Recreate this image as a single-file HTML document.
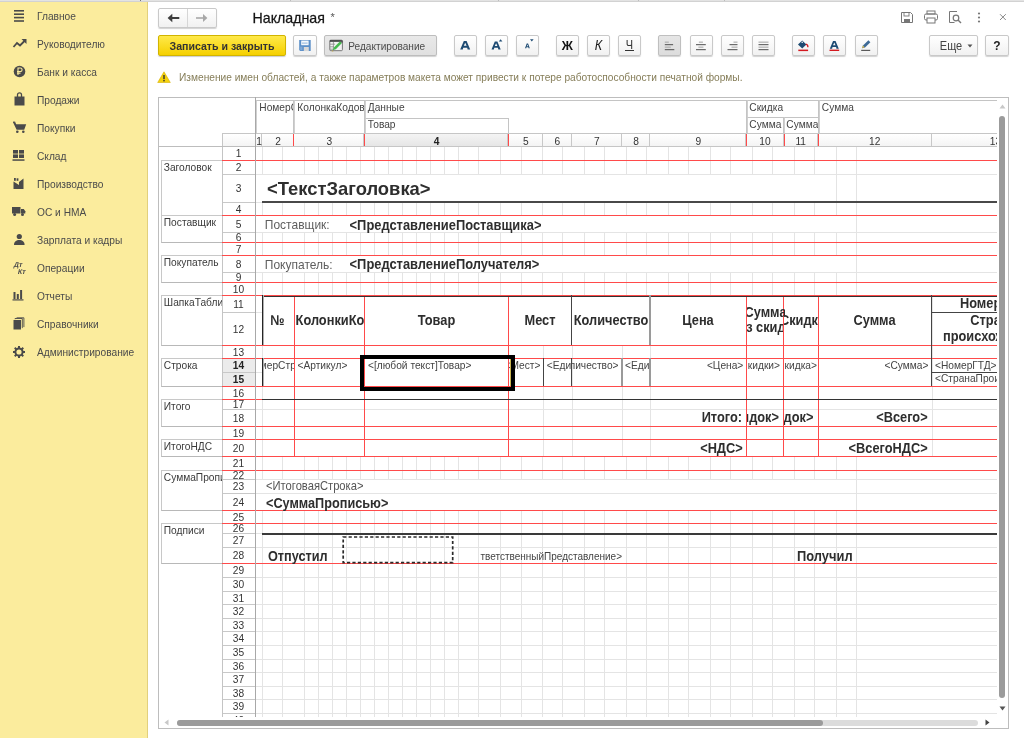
<!DOCTYPE html><html><head><meta charset="utf-8"><style>
html,body{margin:0;padding:0;width:1024px;height:738px;overflow:hidden;background:#fff;font-family:"Liberation Sans",sans-serif;}
body{position:relative;will-change:transform}
.btn{position:absolute;box-sizing:border-box;border:1px solid #C9C9C9;border-radius:2px;background:linear-gradient(#FFFFFF,#F1F1F1);box-shadow:0 1px 1px rgba(0,0,0,0.18)}
</style></head><body>
<div style="position:absolute;left:0px;top:0px;width:1024px;height:1px;background:#E3E3E3"></div>
<div style="position:absolute;left:0px;top:1px;width:1024px;height:1px;background:#D2D2D2"></div>
<div style="position:absolute;left:140px;top:0px;width:1px;height:1px;background:#777"></div>
<div style="position:absolute;left:290px;top:0px;width:1px;height:1px;background:#BDBDBD"></div>
<div style="position:absolute;left:498px;top:0px;width:1px;height:1px;background:#BDBDBD"></div>
<div style="position:absolute;left:638px;top:0px;width:1px;height:1px;background:#BDBDBD"></div>
<div style="position:absolute;left:724px;top:0px;width:1px;height:1px;background:#BDBDBD"></div>
<div style="position:absolute;left:0px;top:2px;width:147px;height:736px;background:#FBEC9D"></div>
<div style="position:absolute;left:147px;top:2px;width:1px;height:736px;background:#E2D07C"></div>
<div style="position:absolute;top:8.97px;left:37.00px;line-height:15px;height:15px;font-size:10.2px;font-weight:normal;color:#4B4B4B;white-space:pre;transform:scaleY(1.1);transform-origin:0 11.03px;;">Главное</div>
<div style="position:absolute;top:36.97px;left:37.00px;line-height:15px;height:15px;font-size:10.2px;font-weight:normal;color:#4B4B4B;white-space:pre;transform:scaleY(1.1);transform-origin:0 11.03px;;">Руководителю</div>
<div style="position:absolute;top:64.97px;left:37.00px;line-height:15px;height:15px;font-size:10.2px;font-weight:normal;color:#4B4B4B;white-space:pre;transform:scaleY(1.1);transform-origin:0 11.03px;;">Банк и касса</div>
<div style="position:absolute;top:92.97px;left:37.00px;line-height:15px;height:15px;font-size:10.2px;font-weight:normal;color:#4B4B4B;white-space:pre;transform:scaleY(1.1);transform-origin:0 11.03px;;">Продажи</div>
<div style="position:absolute;top:120.97px;left:37.00px;line-height:15px;height:15px;font-size:10.2px;font-weight:normal;color:#4B4B4B;white-space:pre;transform:scaleY(1.1);transform-origin:0 11.03px;;">Покупки</div>
<div style="position:absolute;top:148.97px;left:37.00px;line-height:15px;height:15px;font-size:10.2px;font-weight:normal;color:#4B4B4B;white-space:pre;transform:scaleY(1.1);transform-origin:0 11.03px;;">Склад</div>
<div style="position:absolute;top:176.97px;left:37.00px;line-height:15px;height:15px;font-size:10.2px;font-weight:normal;color:#4B4B4B;white-space:pre;transform:scaleY(1.1);transform-origin:0 11.03px;;">Производство</div>
<div style="position:absolute;top:204.97px;left:37.00px;line-height:15px;height:15px;font-size:10.2px;font-weight:normal;color:#4B4B4B;white-space:pre;transform:scaleY(1.1);transform-origin:0 11.03px;;">ОС и НМА</div>
<div style="position:absolute;top:232.97px;left:37.00px;line-height:15px;height:15px;font-size:10.2px;font-weight:normal;color:#4B4B4B;white-space:pre;transform:scaleY(1.1);transform-origin:0 11.03px;;">Зарплата и кадры</div>
<div style="position:absolute;top:260.97px;left:37.00px;line-height:15px;height:15px;font-size:10.2px;font-weight:normal;color:#4B4B4B;white-space:pre;transform:scaleY(1.1);transform-origin:0 11.03px;;">Операции</div>
<div style="position:absolute;top:288.97px;left:37.00px;line-height:15px;height:15px;font-size:10.2px;font-weight:normal;color:#4B4B4B;white-space:pre;transform:scaleY(1.1);transform-origin:0 11.03px;;">Отчеты</div>
<div style="position:absolute;top:316.97px;left:37.00px;line-height:15px;height:15px;font-size:10.2px;font-weight:normal;color:#4B4B4B;white-space:pre;transform:scaleY(1.1);transform-origin:0 11.03px;;">Справочники</div>
<div style="position:absolute;top:344.97px;left:37.00px;line-height:15px;height:15px;font-size:10.2px;font-weight:normal;color:#4B4B4B;white-space:pre;transform:scaleY(1.1);transform-origin:0 11.03px;;">Администрирование</div>
<svg style="position:absolute;left:13px;top:9px" width="12" height="13" viewBox="0 0 12 13"><g fill="#4A4A4A"><rect x="1" y="1" width="10" height="1.6"/><rect x="1" y="4.4" width="10" height="1.6"/><rect x="1" y="7.8" width="10" height="1.6"/><rect x="1" y="11.2" width="10" height="1.6"/></g></svg>
<svg style="position:absolute;left:12px;top:38px" width="16" height="11" viewBox="0 0 16 11"><polyline points="1.5,9 5,5 8,7.5 13,2.5" fill="none" stroke="#4A4A4A" stroke-width="1.8"/><polygon points="9.5,1 14.5,1 14.5,6" fill="#4A4A4A"/></svg>
<svg style="position:absolute;left:13px;top:65px" width="13" height="13" viewBox="0 0 13 13"><circle cx="6.5" cy="6.5" r="5.8" fill="#4A4A4A"/><path d="M5 10V3h2.3a1.8 1.8 0 0 1 0 3.6H4M4 8.3h3.5" stroke="#FBEC9D" stroke-width="1.1" fill="none"/></svg>
<svg style="position:absolute;left:13px;top:92px" width="13" height="14" viewBox="0 0 13 14"><path d="M1.5 4.5h10v9h-10z" fill="#4A4A4A"/><path d="M4.5 5V2.8a2 2 0 0 1 4 0V5" stroke="#4A4A4A" stroke-width="1.3" fill="none"/></svg>
<svg style="position:absolute;left:12px;top:121px" width="15" height="13" viewBox="0 0 15 13"><path d="M1 1.2h2.2l1 2h10l-2 5.5H4.6z" fill="#4A4A4A"/><path d="M1 1.2h2.2" stroke="#4A4A4A" stroke-width="1.2"/><circle cx="5.3" cy="10.8" r="1.3" fill="#4A4A4A"/><circle cx="11.3" cy="10.8" r="1.3" fill="#4A4A4A"/></svg>
<svg style="position:absolute;left:12px;top:149px" width="13" height="13" viewBox="0 0 13 13"><g fill="#4A4A4A"><rect x="1" y="1" width="5" height="3.6"/><rect x="7" y="1" width="5" height="3.6"/><rect x="1" y="5.4" width="5" height="3.6"/><rect x="7" y="5.4" width="5" height="3.6"/><rect x="0.5" y="10.3" width="12" height="1.5"/></g></svg>
<svg style="position:absolute;left:12px;top:177px" width="13" height="13" viewBox="0 0 13 13"><path d="M1.5 12V4.5L7 8V5l4.5 -3.5V12z" fill="#4A4A4A"/><rect x="2" y="1" width="1.8" height="2.8" fill="#4A4A4A"/><rect x="4.6" y="1.3" width="1.8" height="2.5" fill="#4A4A4A"/></svg>
<svg style="position:absolute;left:11px;top:206px" width="15" height="11" viewBox="0 0 15 11"><rect x="1" y="1" width="8.5" height="6.5" fill="#4A4A4A"/><path d="M10 3h2.8l1.5 2.2v2.3H10z" fill="#4A4A4A"/><circle cx="3.6" cy="8.6" r="1.5" fill="#4A4A4A"/><circle cx="11.5" cy="8.6" r="1.5" fill="#4A4A4A"/></svg>
<svg style="position:absolute;left:13px;top:233px" width="13" height="13" viewBox="0 0 13 13"><circle cx="6.3" cy="3.5" r="2.6" fill="#4A4A4A"/><path d="M1 12c0-3.2 2.3-5 5.3-5s5.3 1.8 5.3 5z" fill="#4A4A4A"/></svg>
<div style="position:absolute;left:13.6px;top:261px;font-size:7px;font-weight:bold;transform:skewX(-12deg);color:#4A4A4A;line-height:7px">Дт</div>
<div style="position:absolute;left:18.2px;top:268.2px;font-size:7px;font-weight:bold;transform:skewX(-12deg);color:#4A4A4A;line-height:7px">Кт</div>
<svg style="position:absolute;left:12px;top:289px" width="13" height="12" viewBox="0 0 13 12"><g fill="#4A4A4A"><rect x="1.5" y="3" width="2" height="7"/><rect x="4.8" y="5" width="2" height="5"/><rect x="8.1" y="1" width="2" height="9"/><rect x="0.5" y="10.3" width="11" height="1.2"/></g></svg>
<svg style="position:absolute;left:13px;top:317px" width="12" height="13" viewBox="0 0 12 13"><rect x="0.5" y="3" width="7.5" height="9.5" fill="#4A4A4A"/><path d="M2 2.2V1.5h7.3v9.3H9" stroke="#4A4A4A" stroke-width="0.9" fill="none"/><path d="M3.6 0.8h7.3v9.3" stroke="#4A4A4A" stroke-width="0.9" fill="none"/></svg>
<svg style="position:absolute;left:12px;top:345px" width="14" height="14" viewBox="0 0 14 14"><g transform="translate(7 7)"><circle r="3.6" fill="none" stroke="#4A4A4A" stroke-width="2"/><rect x="-1" y="-6" width="2" height="2.6" fill="#4A4A4A" transform="rotate(0)"/><rect x="-1" y="-6" width="2" height="2.6" fill="#4A4A4A" transform="rotate(45)"/><rect x="-1" y="-6" width="2" height="2.6" fill="#4A4A4A" transform="rotate(90)"/><rect x="-1" y="-6" width="2" height="2.6" fill="#4A4A4A" transform="rotate(135)"/><rect x="-1" y="-6" width="2" height="2.6" fill="#4A4A4A" transform="rotate(180)"/><rect x="-1" y="-6" width="2" height="2.6" fill="#4A4A4A" transform="rotate(225)"/><rect x="-1" y="-6" width="2" height="2.6" fill="#4A4A4A" transform="rotate(270)"/><rect x="-1" y="-6" width="2" height="2.6" fill="#4A4A4A" transform="rotate(315)"/></g></svg>
<div class="btn" style="left:158px;top:8px;width:59px;height:20px;border-radius:2px"></div>
<div style="position:absolute;left:187px;top:9px;width:1px;height:18px;background:#D6D6D6"></div>
<svg style="position:absolute;left:166px;top:12px" width="14" height="12" viewBox="0 0 14 12"><path d="M5 6h8.3" stroke="#3E3E3E" stroke-width="2"/><path d="M1.6 6L6.3 1.8V10.2z" fill="#3E3E3E"/></svg>
<svg style="position:absolute;left:195px;top:12px" width="14" height="12" viewBox="0 0 14 12"><path d="M1 6h8" stroke="#A8A8A8" stroke-width="1.6"/><path d="M12.4 6L8 2V10z" fill="#A8A8A8"/></svg>
<div style="position:absolute;top:8.08px;left:252.50px;line-height:20px;height:20px;font-size:14.2px;font-weight:normal;color:#151515;white-space:pre;transform:scaleY(1.04);transform-origin:0 14.92px;-webkit-text-stroke:0.25px #151515;">Накладная</div>
<div style="position:absolute;top:9.39px;left:330.50px;line-height:16px;height:16px;font-size:11px;font-weight:normal;color:#555;white-space:pre;;">*</div>
<svg style="position:absolute;left:900px;top:11px" width="14" height="13" viewBox="0 0 14 13"><path d="M1.5 1.5h9l2 2v8h-11z" fill="none" stroke="#777" stroke-width="1"/><rect x="4" y="1.5" width="5" height="3.5" fill="none" stroke="#777" stroke-width="0.9"/><rect x="4" y="8" width="6" height="3.5" fill="#777"/></svg>
<svg style="position:absolute;left:923px;top:10px" width="16" height="14" viewBox="0 0 16 14"><rect x="4" y="1" width="8" height="3" fill="none" stroke="#777" stroke-width="1"/><rect x="1.5" y="4" width="13" height="6" rx="1.5" fill="none" stroke="#777" stroke-width="1"/><rect x="4" y="8" width="8" height="5" fill="#fff" stroke="#777" stroke-width="1"/></svg>
<svg style="position:absolute;left:948px;top:10px" width="14" height="15" viewBox="0 0 14 15"><path d="M9 1.5H1.5v11h5" fill="none" stroke="#777" stroke-width="1"/><circle cx="8" cy="8" r="2.8" fill="none" stroke="#777" stroke-width="1.2"/><path d="M10 10l3 3" stroke="#777" stroke-width="1.4"/></svg>
<svg style="position:absolute;left:976px;top:11px" width="6" height="13" viewBox="0 0 6 13"><g fill="#777"><circle cx="3" cy="2.5" r="1.1"/><circle cx="3" cy="6.5" r="1.1"/><circle cx="3" cy="10.5" r="1.1"/></g></svg>
<svg style="position:absolute;left:999px;top:13px" width="8" height="8" viewBox="0 0 8 8"><path d="M1 1.2l5.8 5.8M6.8 1.2L1 7" stroke="#8A8A8A" stroke-width="1"/></svg>
<div style="position:absolute;left:158px;top:35px;width:128px;height:21px;box-sizing:border-box;border:1px solid #D1B400;border-radius:2px;background:linear-gradient(#FFE94A,#F5D000);box-shadow:0 1px 1px rgba(0,0,0,0.2)"></div>
<div style="position:absolute;top:38.83px;left:-278.00px;width:1000px;text-align:center;line-height:15px;height:15px;font-size:10.6px;font-weight:bold;color:#333;white-space:pre;transform:scaleY(1.1);transform-origin:0 11.17px;;">Записать и закрыть</div>
<div class="btn" style="left:293px;top:35px;width:24px;height:21px"></div>
<svg style="position:absolute;left:298px;top:39px" width="14" height="13" viewBox="0 0 14 13"><path d="M1.2 1.1h11.5V12.1H2.2l-1-1z" fill="#5B8FC8"/><rect x="3.2" y="1.6" width="7.4" height="4.6" fill="#F4F8FC"/><rect x="4" y="3.6" width="5.6" height="1" fill="#8DB3DC"/><rect x="5.8" y="8" width="5" height="4.1" fill="#D8D8D8"/><rect x="2.2" y="7.6" width="2.2" height="3.6" fill="#7FA9D6"/></svg>
<div class="btn" style="left:324px;top:35px;width:113px;height:21px;background:linear-gradient(#E9E9E9,#E0E0E0);border-color:#BDBDBD"></div>
<svg style="position:absolute;left:328px;top:38px" width="16" height="15" viewBox="0 0 16 15"><rect x="1.8" y="2.2" width="12.6" height="10.5" rx="1" fill="#F2F2F2" stroke="#6A6A6A" stroke-width="0.9"/><rect x="1.8" y="2.2" width="12.6" height="1.6" fill="#3A3A3A"/><path d="M2 6.2h5M2 8.8h4M2 11.2h3M5.4 4v8.6" stroke="#8A8A8A" stroke-width="0.8"/><path d="M4.6 12.2l1.3-2.8 6.2-6.2 1.9 1.9-6.2 6.2z" fill="#47B84F"/><path d="M12.1 3.2l1.2-1.2 1.9 1.9-1.2 1.2z" fill="#5A5A5A"/><path d="M3.6 13.6l1-1.4 1 1z" fill="#C9A535"/></svg>
<div style="position:absolute;top:38.50px;left:348.30px;line-height:15px;height:15px;font-size:10.1px;font-weight:normal;color:#4D4D4D;white-space:pre;transform:scaleY(1.1);transform-origin:0 11.00px;;">Редактирование</div>
<div class="btn" style="left:453.5px;top:35px;width:23px;height:21px;"></div>
<div class="btn" style="left:484.5px;top:35px;width:23px;height:21px;"></div>
<div class="btn" style="left:515.5px;top:35px;width:23px;height:21px;"></div>
<div class="btn" style="left:555.5px;top:35px;width:23px;height:21px;"></div>
<div class="btn" style="left:586.5px;top:35px;width:23px;height:21px;"></div>
<div class="btn" style="left:617.5px;top:35px;width:23px;height:21px;"></div>
<div class="btn" style="left:657.5px;top:35px;width:23px;height:21px;background:linear-gradient(#E6E6E6,#DCDCDC);border-color:#BFBFBF;"></div>
<div class="btn" style="left:689.5px;top:35px;width:23px;height:21px;"></div>
<div class="btn" style="left:720.5px;top:35px;width:23px;height:21px;"></div>
<div class="btn" style="left:751.5px;top:35px;width:23px;height:21px;"></div>
<div class="btn" style="left:791.5px;top:35px;width:23px;height:21px;"></div>
<div class="btn" style="left:822.5px;top:35px;width:23px;height:21px;"></div>
<div class="btn" style="left:854.5px;top:35px;width:23px;height:21px;"></div>
<svg style="position:absolute;left:0;top:0" width="1024" height="60"><path d="M460.2 49.6L463.8 41H466.59999999999997L470.2 49.6H467.59999999999997L467.2 47.708H463.2L462.8 49.6Z M463.8 45.816H466.59999999999997L465.2 42.72Z" fill="#1E4B73" fill-rule="evenodd"/><path d="M491.5 49.6L494.812 41.6H497.388L500.7 49.6H498.308L497.94 47.84H494.26L493.892 49.6Z M494.812 46.08H497.388L496.1 43.2Z" fill="#1E4B73" fill-rule="evenodd"/><path d="M498.8 41.4L500.6 39.2L502.4 41.4z" fill="#1E4B73"/><path d="M525 48.2L526.728 43.6H528.072L529.8 48.2H528.5519999999999L528.36 47.188H526.44L526.248 48.2Z M526.728 46.176H528.072L527.4 44.52Z" fill="#1E4B73" fill-rule="evenodd"/><path d="M530 39.2H533.6L531.8 41.4z" fill="#1E4B73"/></svg>
<div style="position:absolute;top:36.74px;left:67.20px;width:1000px;text-align:center;line-height:18px;height:18px;font-size:12.3px;font-weight:bold;color:#111;white-space:pre;transform:scaleY(1.1);transform-origin:0 13.26px;;">Ж</div>
<div style="position:absolute;top:36.83px;left:98.50px;width:1000px;text-align:center;line-height:18px;height:18px;font-size:12.6px;font-weight:normal;color:#1A1A1A;white-space:pre;transform:scaleY(1.1);transform-origin:0 13.37px;font-style:italic;">К</div>
<div style="position:absolute;top:37.19px;left:129.50px;width:1000px;text-align:center;line-height:16px;height:16px;font-size:11px;font-weight:normal;color:#333;white-space:pre;transform:scaleY(1.1);transform-origin:0 11.81px;;">Ч</div>
<div style="position:absolute;left:625px;top:50px;width:9px;height:1px;background:#333"></div>
<svg style="position:absolute;left:0;top:0" width="1024" height="60"><rect x="664.80" y="41.6" width="4" height="1.1" fill="#AAAAAA"/><rect x="664.80" y="44.1" width="8.3" height="1.1" fill="#5C5C5C"/><rect x="664.80" y="46.6" width="6" height="1.1" fill="#AAAAAA"/><rect x="664.80" y="49.1" width="9.5" height="1.1" fill="#5C5C5C"/><rect x="698.90" y="41.6" width="4" height="1.1" fill="#AAAAAA"/><rect x="696.00" y="44.1" width="9.8" height="1.1" fill="#5C5C5C"/><rect x="698.40" y="46.6" width="5" height="1.1" fill="#AAAAAA"/><rect x="696.00" y="49.1" width="9.8" height="1.1" fill="#5C5C5C"/><rect x="733.50" y="41.6" width="4" height="1.1" fill="#AAAAAA"/><rect x="729.50" y="44.1" width="8" height="1.1" fill="#5C5C5C"/><rect x="731.50" y="46.6" width="6" height="1.1" fill="#AAAAAA"/><rect x="727.50" y="49.1" width="10" height="1.1" fill="#5C5C5C"/><rect x="758.50" y="41.6" width="10" height="1.1" fill="#AAAAAA"/><rect x="758.50" y="44.1" width="10" height="1.1" fill="#5C5C5C"/><rect x="758.50" y="46.6" width="10" height="1.1" fill="#AAAAAA"/><rect x="758.50" y="49.1" width="10" height="1.1" fill="#5C5C5C"/></svg>
<svg style="position:absolute;left:0;top:0" width="1024" height="60"><path d="M802.2 40.5L806.4 44.5L802.2 48.5L798 44.5z" fill="#1E4B73"/><circle cx="802.2" cy="42.2" r="0.8" fill="#fff"/><path d="M805.8 44.2c1.3 0.2 2.2 1.3 2.1 3" stroke="#D41920" stroke-width="1.3" fill="none"/><rect x="798.3" y="49.6" width="9.8" height="1.5" fill="#D41920"/><path d="M829.8 48.8L833.04 41H835.56L838.8 48.8H836.4599999999999L836.0999999999999 47.084H832.5L832.14 48.8Z M833.04 45.368H835.56L834.3 42.56Z" fill="#1E4B73" fill-rule="evenodd"/><rect x="829.5" y="49.6" width="9.7" height="1.4" fill="#D41920"/><path d="M862 48.3L863 45.6L868.4 40.2L870.4 42.2L865 47.6z" fill="#3E6A96"/><path d="M862 48.3L863 45.6L864.7 47.3z" fill="#D9B84A"/><rect x="861.2" y="49.8" width="9" height="1.2" fill="#5A5A5A"/></svg>
<div class="btn" style="left:929px;top:35px;width:49px;height:21px"></div>
<div style="position:absolute;top:38.19px;left:451.00px;width:1000px;text-align:center;line-height:16px;height:16px;font-size:11px;font-weight:normal;color:#444;white-space:pre;transform:scaleY(1.1);transform-origin:0 11.81px;;">Еще</div>
<svg style="position:absolute;left:967px;top:44px" width="6" height="4" viewBox="0 0 6 4"><path d="M0.5 0.5h5L3 3.5z" fill="#555"/></svg>
<div class="btn" style="left:985px;top:35px;width:24px;height:21px"></div>
<div style="position:absolute;top:37.84px;left:497.00px;width:1000px;text-align:center;line-height:17px;height:17px;font-size:12px;font-weight:bold;color:#222;white-space:pre;transform:scaleY(1.1);transform-origin:0 12.66px;;">?</div>
<svg style="position:absolute;left:157px;top:71px" width="14" height="12" viewBox="0 0 14 12"><path d="M7 0.8L13.3 11.5H0.7z" fill="#F5D20C" stroke="#D6B000" stroke-width="0.6"/><rect x="6.3" y="4" width="1.4" height="4.2" fill="#333"/><rect x="6.3" y="9" width="1.4" height="1.4" fill="#333"/></svg>
<div style="position:absolute;top:69.57px;left:179.00px;line-height:15px;height:15px;font-size:10.18px;font-weight:normal;color:#857D58;white-space:pre;transform:scaleY(1.1);transform-origin:0 11.03px;;">Изменение имен областей, а также параметров макета может привести к потере работоспособности печатной формы.</div>
<div style="position:absolute;left:158px;top:97px;width:851px;height:632px;box-sizing:border-box;border:1px solid #BDBDBD"></div>
<div style="position:absolute;left:0;top:0;width:1024px;height:738px;overflow:hidden;clip-path:inset(0 0 21px 0)">
<div style="position:absolute;left:262px;top:146px;width:1px;height:14px;background:#E4E4E4"></div>
<div style="position:absolute;left:282px;top:146px;width:1px;height:14px;background:#E4E4E4"></div>
<div style="position:absolute;left:304px;top:146px;width:1px;height:14px;background:#E4E4E4"></div>
<div style="position:absolute;left:318px;top:146px;width:1px;height:14px;background:#E4E4E4"></div>
<div style="position:absolute;left:332px;top:146px;width:1px;height:14px;background:#E4E4E4"></div>
<div style="position:absolute;left:346px;top:146px;width:1px;height:14px;background:#E4E4E4"></div>
<div style="position:absolute;left:360px;top:146px;width:1px;height:14px;background:#E4E4E4"></div>
<div style="position:absolute;left:374px;top:146px;width:1px;height:14px;background:#E4E4E4"></div>
<div style="position:absolute;left:388px;top:146px;width:1px;height:14px;background:#E4E4E4"></div>
<div style="position:absolute;left:402px;top:146px;width:1px;height:14px;background:#E4E4E4"></div>
<div style="position:absolute;left:416px;top:146px;width:1px;height:14px;background:#E4E4E4"></div>
<div style="position:absolute;left:430px;top:146px;width:1px;height:14px;background:#E4E4E4"></div>
<div style="position:absolute;left:444px;top:146px;width:1px;height:14px;background:#E4E4E4"></div>
<div style="position:absolute;left:458px;top:146px;width:1px;height:14px;background:#E4E4E4"></div>
<div style="position:absolute;left:478px;top:146px;width:1px;height:14px;background:#E4E4E4"></div>
<div style="position:absolute;left:500px;top:146px;width:1px;height:14px;background:#E4E4E4"></div>
<div style="position:absolute;left:521px;top:146px;width:1px;height:14px;background:#E4E4E4"></div>
<div style="position:absolute;left:542px;top:146px;width:1px;height:14px;background:#E4E4E4"></div>
<div style="position:absolute;left:562px;top:146px;width:1px;height:14px;background:#E4E4E4"></div>
<div style="position:absolute;left:584px;top:146px;width:1px;height:14px;background:#E4E4E4"></div>
<div style="position:absolute;left:604px;top:146px;width:1px;height:14px;background:#E4E4E4"></div>
<div style="position:absolute;left:626px;top:146px;width:1px;height:14px;background:#E4E4E4"></div>
<div style="position:absolute;left:646px;top:146px;width:1px;height:14px;background:#E4E4E4"></div>
<div style="position:absolute;left:668px;top:146px;width:1px;height:14px;background:#E4E4E4"></div>
<div style="position:absolute;left:688px;top:146px;width:1px;height:14px;background:#E4E4E4"></div>
<div style="position:absolute;left:710px;top:146px;width:1px;height:14px;background:#E4E4E4"></div>
<div style="position:absolute;left:730px;top:146px;width:1px;height:14px;background:#E4E4E4"></div>
<div style="position:absolute;left:752px;top:146px;width:1px;height:14px;background:#E4E4E4"></div>
<div style="position:absolute;left:772px;top:146px;width:1px;height:14px;background:#E4E4E4"></div>
<div style="position:absolute;left:794px;top:146px;width:1px;height:14px;background:#E4E4E4"></div>
<div style="position:absolute;left:814px;top:146px;width:1px;height:14px;background:#E4E4E4"></div>
<div style="position:absolute;left:836px;top:146px;width:1px;height:14px;background:#E4E4E4"></div>
<div style="position:absolute;left:856px;top:146px;width:1px;height:14px;background:#E4E4E4"></div>
<div style="position:absolute;left:262px;top:160px;width:1px;height:14px;background:#E4E4E4"></div>
<div style="position:absolute;left:282px;top:160px;width:1px;height:14px;background:#E4E4E4"></div>
<div style="position:absolute;left:304px;top:160px;width:1px;height:14px;background:#E4E4E4"></div>
<div style="position:absolute;left:318px;top:160px;width:1px;height:14px;background:#E4E4E4"></div>
<div style="position:absolute;left:332px;top:160px;width:1px;height:14px;background:#E4E4E4"></div>
<div style="position:absolute;left:346px;top:160px;width:1px;height:14px;background:#E4E4E4"></div>
<div style="position:absolute;left:360px;top:160px;width:1px;height:14px;background:#E4E4E4"></div>
<div style="position:absolute;left:374px;top:160px;width:1px;height:14px;background:#E4E4E4"></div>
<div style="position:absolute;left:388px;top:160px;width:1px;height:14px;background:#E4E4E4"></div>
<div style="position:absolute;left:402px;top:160px;width:1px;height:14px;background:#E4E4E4"></div>
<div style="position:absolute;left:416px;top:160px;width:1px;height:14px;background:#E4E4E4"></div>
<div style="position:absolute;left:430px;top:160px;width:1px;height:14px;background:#E4E4E4"></div>
<div style="position:absolute;left:444px;top:160px;width:1px;height:14px;background:#E4E4E4"></div>
<div style="position:absolute;left:458px;top:160px;width:1px;height:14px;background:#E4E4E4"></div>
<div style="position:absolute;left:478px;top:160px;width:1px;height:14px;background:#E4E4E4"></div>
<div style="position:absolute;left:500px;top:160px;width:1px;height:14px;background:#E4E4E4"></div>
<div style="position:absolute;left:521px;top:160px;width:1px;height:14px;background:#E4E4E4"></div>
<div style="position:absolute;left:542px;top:160px;width:1px;height:14px;background:#E4E4E4"></div>
<div style="position:absolute;left:562px;top:160px;width:1px;height:14px;background:#E4E4E4"></div>
<div style="position:absolute;left:584px;top:160px;width:1px;height:14px;background:#E4E4E4"></div>
<div style="position:absolute;left:604px;top:160px;width:1px;height:14px;background:#E4E4E4"></div>
<div style="position:absolute;left:626px;top:160px;width:1px;height:14px;background:#E4E4E4"></div>
<div style="position:absolute;left:646px;top:160px;width:1px;height:14px;background:#E4E4E4"></div>
<div style="position:absolute;left:668px;top:160px;width:1px;height:14px;background:#E4E4E4"></div>
<div style="position:absolute;left:688px;top:160px;width:1px;height:14px;background:#E4E4E4"></div>
<div style="position:absolute;left:710px;top:160px;width:1px;height:14px;background:#E4E4E4"></div>
<div style="position:absolute;left:730px;top:160px;width:1px;height:14px;background:#E4E4E4"></div>
<div style="position:absolute;left:752px;top:160px;width:1px;height:14px;background:#E4E4E4"></div>
<div style="position:absolute;left:772px;top:160px;width:1px;height:14px;background:#E4E4E4"></div>
<div style="position:absolute;left:794px;top:160px;width:1px;height:14px;background:#E4E4E4"></div>
<div style="position:absolute;left:814px;top:160px;width:1px;height:14px;background:#E4E4E4"></div>
<div style="position:absolute;left:836px;top:160px;width:1px;height:14px;background:#E4E4E4"></div>
<div style="position:absolute;left:856px;top:160px;width:1px;height:14px;background:#E4E4E4"></div>
<div style="position:absolute;left:836px;top:174px;width:1px;height:28px;background:#E4E4E4"></div>
<div style="position:absolute;left:856px;top:174px;width:1px;height:28px;background:#E4E4E4"></div>
<div style="position:absolute;left:262px;top:202px;width:1px;height:13px;background:#E4E4E4"></div>
<div style="position:absolute;left:282px;top:202px;width:1px;height:13px;background:#E4E4E4"></div>
<div style="position:absolute;left:304px;top:202px;width:1px;height:13px;background:#E4E4E4"></div>
<div style="position:absolute;left:318px;top:202px;width:1px;height:13px;background:#E4E4E4"></div>
<div style="position:absolute;left:332px;top:202px;width:1px;height:13px;background:#E4E4E4"></div>
<div style="position:absolute;left:346px;top:202px;width:1px;height:13px;background:#E4E4E4"></div>
<div style="position:absolute;left:360px;top:202px;width:1px;height:13px;background:#E4E4E4"></div>
<div style="position:absolute;left:374px;top:202px;width:1px;height:13px;background:#E4E4E4"></div>
<div style="position:absolute;left:388px;top:202px;width:1px;height:13px;background:#E4E4E4"></div>
<div style="position:absolute;left:402px;top:202px;width:1px;height:13px;background:#E4E4E4"></div>
<div style="position:absolute;left:416px;top:202px;width:1px;height:13px;background:#E4E4E4"></div>
<div style="position:absolute;left:430px;top:202px;width:1px;height:13px;background:#E4E4E4"></div>
<div style="position:absolute;left:444px;top:202px;width:1px;height:13px;background:#E4E4E4"></div>
<div style="position:absolute;left:458px;top:202px;width:1px;height:13px;background:#E4E4E4"></div>
<div style="position:absolute;left:478px;top:202px;width:1px;height:13px;background:#E4E4E4"></div>
<div style="position:absolute;left:500px;top:202px;width:1px;height:13px;background:#E4E4E4"></div>
<div style="position:absolute;left:521px;top:202px;width:1px;height:13px;background:#E4E4E4"></div>
<div style="position:absolute;left:542px;top:202px;width:1px;height:13px;background:#E4E4E4"></div>
<div style="position:absolute;left:562px;top:202px;width:1px;height:13px;background:#E4E4E4"></div>
<div style="position:absolute;left:584px;top:202px;width:1px;height:13px;background:#E4E4E4"></div>
<div style="position:absolute;left:604px;top:202px;width:1px;height:13px;background:#E4E4E4"></div>
<div style="position:absolute;left:626px;top:202px;width:1px;height:13px;background:#E4E4E4"></div>
<div style="position:absolute;left:646px;top:202px;width:1px;height:13px;background:#E4E4E4"></div>
<div style="position:absolute;left:668px;top:202px;width:1px;height:13px;background:#E4E4E4"></div>
<div style="position:absolute;left:688px;top:202px;width:1px;height:13px;background:#E4E4E4"></div>
<div style="position:absolute;left:710px;top:202px;width:1px;height:13px;background:#E4E4E4"></div>
<div style="position:absolute;left:730px;top:202px;width:1px;height:13px;background:#E4E4E4"></div>
<div style="position:absolute;left:752px;top:202px;width:1px;height:13px;background:#E4E4E4"></div>
<div style="position:absolute;left:772px;top:202px;width:1px;height:13px;background:#E4E4E4"></div>
<div style="position:absolute;left:794px;top:202px;width:1px;height:13px;background:#E4E4E4"></div>
<div style="position:absolute;left:814px;top:202px;width:1px;height:13px;background:#E4E4E4"></div>
<div style="position:absolute;left:836px;top:202px;width:1px;height:13px;background:#E4E4E4"></div>
<div style="position:absolute;left:856px;top:202px;width:1px;height:13px;background:#E4E4E4"></div>
<div style="position:absolute;left:856px;top:215px;width:1px;height:17px;background:#E4E4E4"></div>
<div style="position:absolute;left:262px;top:232px;width:1px;height:10px;background:#E4E4E4"></div>
<div style="position:absolute;left:282px;top:232px;width:1px;height:10px;background:#E4E4E4"></div>
<div style="position:absolute;left:304px;top:232px;width:1px;height:10px;background:#E4E4E4"></div>
<div style="position:absolute;left:318px;top:232px;width:1px;height:10px;background:#E4E4E4"></div>
<div style="position:absolute;left:332px;top:232px;width:1px;height:10px;background:#E4E4E4"></div>
<div style="position:absolute;left:346px;top:232px;width:1px;height:10px;background:#E4E4E4"></div>
<div style="position:absolute;left:360px;top:232px;width:1px;height:10px;background:#E4E4E4"></div>
<div style="position:absolute;left:374px;top:232px;width:1px;height:10px;background:#E4E4E4"></div>
<div style="position:absolute;left:388px;top:232px;width:1px;height:10px;background:#E4E4E4"></div>
<div style="position:absolute;left:402px;top:232px;width:1px;height:10px;background:#E4E4E4"></div>
<div style="position:absolute;left:416px;top:232px;width:1px;height:10px;background:#E4E4E4"></div>
<div style="position:absolute;left:430px;top:232px;width:1px;height:10px;background:#E4E4E4"></div>
<div style="position:absolute;left:444px;top:232px;width:1px;height:10px;background:#E4E4E4"></div>
<div style="position:absolute;left:458px;top:232px;width:1px;height:10px;background:#E4E4E4"></div>
<div style="position:absolute;left:478px;top:232px;width:1px;height:10px;background:#E4E4E4"></div>
<div style="position:absolute;left:500px;top:232px;width:1px;height:10px;background:#E4E4E4"></div>
<div style="position:absolute;left:521px;top:232px;width:1px;height:10px;background:#E4E4E4"></div>
<div style="position:absolute;left:542px;top:232px;width:1px;height:10px;background:#E4E4E4"></div>
<div style="position:absolute;left:562px;top:232px;width:1px;height:10px;background:#E4E4E4"></div>
<div style="position:absolute;left:584px;top:232px;width:1px;height:10px;background:#E4E4E4"></div>
<div style="position:absolute;left:604px;top:232px;width:1px;height:10px;background:#E4E4E4"></div>
<div style="position:absolute;left:626px;top:232px;width:1px;height:10px;background:#E4E4E4"></div>
<div style="position:absolute;left:646px;top:232px;width:1px;height:10px;background:#E4E4E4"></div>
<div style="position:absolute;left:668px;top:232px;width:1px;height:10px;background:#E4E4E4"></div>
<div style="position:absolute;left:688px;top:232px;width:1px;height:10px;background:#E4E4E4"></div>
<div style="position:absolute;left:710px;top:232px;width:1px;height:10px;background:#E4E4E4"></div>
<div style="position:absolute;left:730px;top:232px;width:1px;height:10px;background:#E4E4E4"></div>
<div style="position:absolute;left:752px;top:232px;width:1px;height:10px;background:#E4E4E4"></div>
<div style="position:absolute;left:772px;top:232px;width:1px;height:10px;background:#E4E4E4"></div>
<div style="position:absolute;left:794px;top:232px;width:1px;height:10px;background:#E4E4E4"></div>
<div style="position:absolute;left:814px;top:232px;width:1px;height:10px;background:#E4E4E4"></div>
<div style="position:absolute;left:836px;top:232px;width:1px;height:10px;background:#E4E4E4"></div>
<div style="position:absolute;left:856px;top:232px;width:1px;height:10px;background:#E4E4E4"></div>
<div style="position:absolute;left:262px;top:242px;width:1px;height:13px;background:#E4E4E4"></div>
<div style="position:absolute;left:282px;top:242px;width:1px;height:13px;background:#E4E4E4"></div>
<div style="position:absolute;left:304px;top:242px;width:1px;height:13px;background:#E4E4E4"></div>
<div style="position:absolute;left:318px;top:242px;width:1px;height:13px;background:#E4E4E4"></div>
<div style="position:absolute;left:332px;top:242px;width:1px;height:13px;background:#E4E4E4"></div>
<div style="position:absolute;left:346px;top:242px;width:1px;height:13px;background:#E4E4E4"></div>
<div style="position:absolute;left:360px;top:242px;width:1px;height:13px;background:#E4E4E4"></div>
<div style="position:absolute;left:374px;top:242px;width:1px;height:13px;background:#E4E4E4"></div>
<div style="position:absolute;left:388px;top:242px;width:1px;height:13px;background:#E4E4E4"></div>
<div style="position:absolute;left:402px;top:242px;width:1px;height:13px;background:#E4E4E4"></div>
<div style="position:absolute;left:416px;top:242px;width:1px;height:13px;background:#E4E4E4"></div>
<div style="position:absolute;left:430px;top:242px;width:1px;height:13px;background:#E4E4E4"></div>
<div style="position:absolute;left:444px;top:242px;width:1px;height:13px;background:#E4E4E4"></div>
<div style="position:absolute;left:458px;top:242px;width:1px;height:13px;background:#E4E4E4"></div>
<div style="position:absolute;left:478px;top:242px;width:1px;height:13px;background:#E4E4E4"></div>
<div style="position:absolute;left:500px;top:242px;width:1px;height:13px;background:#E4E4E4"></div>
<div style="position:absolute;left:521px;top:242px;width:1px;height:13px;background:#E4E4E4"></div>
<div style="position:absolute;left:542px;top:242px;width:1px;height:13px;background:#E4E4E4"></div>
<div style="position:absolute;left:562px;top:242px;width:1px;height:13px;background:#E4E4E4"></div>
<div style="position:absolute;left:584px;top:242px;width:1px;height:13px;background:#E4E4E4"></div>
<div style="position:absolute;left:604px;top:242px;width:1px;height:13px;background:#E4E4E4"></div>
<div style="position:absolute;left:626px;top:242px;width:1px;height:13px;background:#E4E4E4"></div>
<div style="position:absolute;left:646px;top:242px;width:1px;height:13px;background:#E4E4E4"></div>
<div style="position:absolute;left:668px;top:242px;width:1px;height:13px;background:#E4E4E4"></div>
<div style="position:absolute;left:688px;top:242px;width:1px;height:13px;background:#E4E4E4"></div>
<div style="position:absolute;left:710px;top:242px;width:1px;height:13px;background:#E4E4E4"></div>
<div style="position:absolute;left:730px;top:242px;width:1px;height:13px;background:#E4E4E4"></div>
<div style="position:absolute;left:752px;top:242px;width:1px;height:13px;background:#E4E4E4"></div>
<div style="position:absolute;left:772px;top:242px;width:1px;height:13px;background:#E4E4E4"></div>
<div style="position:absolute;left:794px;top:242px;width:1px;height:13px;background:#E4E4E4"></div>
<div style="position:absolute;left:814px;top:242px;width:1px;height:13px;background:#E4E4E4"></div>
<div style="position:absolute;left:836px;top:242px;width:1px;height:13px;background:#E4E4E4"></div>
<div style="position:absolute;left:856px;top:242px;width:1px;height:13px;background:#E4E4E4"></div>
<div style="position:absolute;left:856px;top:255px;width:1px;height:17px;background:#E4E4E4"></div>
<div style="position:absolute;left:262px;top:272px;width:1px;height:10px;background:#E4E4E4"></div>
<div style="position:absolute;left:282px;top:272px;width:1px;height:10px;background:#E4E4E4"></div>
<div style="position:absolute;left:304px;top:272px;width:1px;height:10px;background:#E4E4E4"></div>
<div style="position:absolute;left:318px;top:272px;width:1px;height:10px;background:#E4E4E4"></div>
<div style="position:absolute;left:332px;top:272px;width:1px;height:10px;background:#E4E4E4"></div>
<div style="position:absolute;left:346px;top:272px;width:1px;height:10px;background:#E4E4E4"></div>
<div style="position:absolute;left:360px;top:272px;width:1px;height:10px;background:#E4E4E4"></div>
<div style="position:absolute;left:374px;top:272px;width:1px;height:10px;background:#E4E4E4"></div>
<div style="position:absolute;left:388px;top:272px;width:1px;height:10px;background:#E4E4E4"></div>
<div style="position:absolute;left:402px;top:272px;width:1px;height:10px;background:#E4E4E4"></div>
<div style="position:absolute;left:416px;top:272px;width:1px;height:10px;background:#E4E4E4"></div>
<div style="position:absolute;left:430px;top:272px;width:1px;height:10px;background:#E4E4E4"></div>
<div style="position:absolute;left:444px;top:272px;width:1px;height:10px;background:#E4E4E4"></div>
<div style="position:absolute;left:458px;top:272px;width:1px;height:10px;background:#E4E4E4"></div>
<div style="position:absolute;left:478px;top:272px;width:1px;height:10px;background:#E4E4E4"></div>
<div style="position:absolute;left:500px;top:272px;width:1px;height:10px;background:#E4E4E4"></div>
<div style="position:absolute;left:521px;top:272px;width:1px;height:10px;background:#E4E4E4"></div>
<div style="position:absolute;left:542px;top:272px;width:1px;height:10px;background:#E4E4E4"></div>
<div style="position:absolute;left:562px;top:272px;width:1px;height:10px;background:#E4E4E4"></div>
<div style="position:absolute;left:584px;top:272px;width:1px;height:10px;background:#E4E4E4"></div>
<div style="position:absolute;left:604px;top:272px;width:1px;height:10px;background:#E4E4E4"></div>
<div style="position:absolute;left:626px;top:272px;width:1px;height:10px;background:#E4E4E4"></div>
<div style="position:absolute;left:646px;top:272px;width:1px;height:10px;background:#E4E4E4"></div>
<div style="position:absolute;left:668px;top:272px;width:1px;height:10px;background:#E4E4E4"></div>
<div style="position:absolute;left:688px;top:272px;width:1px;height:10px;background:#E4E4E4"></div>
<div style="position:absolute;left:710px;top:272px;width:1px;height:10px;background:#E4E4E4"></div>
<div style="position:absolute;left:730px;top:272px;width:1px;height:10px;background:#E4E4E4"></div>
<div style="position:absolute;left:752px;top:272px;width:1px;height:10px;background:#E4E4E4"></div>
<div style="position:absolute;left:772px;top:272px;width:1px;height:10px;background:#E4E4E4"></div>
<div style="position:absolute;left:794px;top:272px;width:1px;height:10px;background:#E4E4E4"></div>
<div style="position:absolute;left:814px;top:272px;width:1px;height:10px;background:#E4E4E4"></div>
<div style="position:absolute;left:836px;top:272px;width:1px;height:10px;background:#E4E4E4"></div>
<div style="position:absolute;left:856px;top:272px;width:1px;height:10px;background:#E4E4E4"></div>
<div style="position:absolute;left:262px;top:282px;width:1px;height:13px;background:#E4E4E4"></div>
<div style="position:absolute;left:282px;top:282px;width:1px;height:13px;background:#E4E4E4"></div>
<div style="position:absolute;left:304px;top:282px;width:1px;height:13px;background:#E4E4E4"></div>
<div style="position:absolute;left:318px;top:282px;width:1px;height:13px;background:#E4E4E4"></div>
<div style="position:absolute;left:332px;top:282px;width:1px;height:13px;background:#E4E4E4"></div>
<div style="position:absolute;left:346px;top:282px;width:1px;height:13px;background:#E4E4E4"></div>
<div style="position:absolute;left:360px;top:282px;width:1px;height:13px;background:#E4E4E4"></div>
<div style="position:absolute;left:374px;top:282px;width:1px;height:13px;background:#E4E4E4"></div>
<div style="position:absolute;left:388px;top:282px;width:1px;height:13px;background:#E4E4E4"></div>
<div style="position:absolute;left:402px;top:282px;width:1px;height:13px;background:#E4E4E4"></div>
<div style="position:absolute;left:416px;top:282px;width:1px;height:13px;background:#E4E4E4"></div>
<div style="position:absolute;left:430px;top:282px;width:1px;height:13px;background:#E4E4E4"></div>
<div style="position:absolute;left:444px;top:282px;width:1px;height:13px;background:#E4E4E4"></div>
<div style="position:absolute;left:458px;top:282px;width:1px;height:13px;background:#E4E4E4"></div>
<div style="position:absolute;left:478px;top:282px;width:1px;height:13px;background:#E4E4E4"></div>
<div style="position:absolute;left:500px;top:282px;width:1px;height:13px;background:#E4E4E4"></div>
<div style="position:absolute;left:521px;top:282px;width:1px;height:13px;background:#E4E4E4"></div>
<div style="position:absolute;left:542px;top:282px;width:1px;height:13px;background:#E4E4E4"></div>
<div style="position:absolute;left:562px;top:282px;width:1px;height:13px;background:#E4E4E4"></div>
<div style="position:absolute;left:584px;top:282px;width:1px;height:13px;background:#E4E4E4"></div>
<div style="position:absolute;left:604px;top:282px;width:1px;height:13px;background:#E4E4E4"></div>
<div style="position:absolute;left:626px;top:282px;width:1px;height:13px;background:#E4E4E4"></div>
<div style="position:absolute;left:646px;top:282px;width:1px;height:13px;background:#E4E4E4"></div>
<div style="position:absolute;left:668px;top:282px;width:1px;height:13px;background:#E4E4E4"></div>
<div style="position:absolute;left:688px;top:282px;width:1px;height:13px;background:#E4E4E4"></div>
<div style="position:absolute;left:710px;top:282px;width:1px;height:13px;background:#E4E4E4"></div>
<div style="position:absolute;left:730px;top:282px;width:1px;height:13px;background:#E4E4E4"></div>
<div style="position:absolute;left:752px;top:282px;width:1px;height:13px;background:#E4E4E4"></div>
<div style="position:absolute;left:772px;top:282px;width:1px;height:13px;background:#E4E4E4"></div>
<div style="position:absolute;left:794px;top:282px;width:1px;height:13px;background:#E4E4E4"></div>
<div style="position:absolute;left:814px;top:282px;width:1px;height:13px;background:#E4E4E4"></div>
<div style="position:absolute;left:836px;top:282px;width:1px;height:13px;background:#E4E4E4"></div>
<div style="position:absolute;left:856px;top:282px;width:1px;height:13px;background:#E4E4E4"></div>
<div style="position:absolute;left:262px;top:456px;width:1px;height:14px;background:#E4E4E4"></div>
<div style="position:absolute;left:282px;top:456px;width:1px;height:14px;background:#E4E4E4"></div>
<div style="position:absolute;left:304px;top:456px;width:1px;height:14px;background:#E4E4E4"></div>
<div style="position:absolute;left:318px;top:456px;width:1px;height:14px;background:#E4E4E4"></div>
<div style="position:absolute;left:332px;top:456px;width:1px;height:14px;background:#E4E4E4"></div>
<div style="position:absolute;left:346px;top:456px;width:1px;height:14px;background:#E4E4E4"></div>
<div style="position:absolute;left:360px;top:456px;width:1px;height:14px;background:#E4E4E4"></div>
<div style="position:absolute;left:374px;top:456px;width:1px;height:14px;background:#E4E4E4"></div>
<div style="position:absolute;left:388px;top:456px;width:1px;height:14px;background:#E4E4E4"></div>
<div style="position:absolute;left:402px;top:456px;width:1px;height:14px;background:#E4E4E4"></div>
<div style="position:absolute;left:416px;top:456px;width:1px;height:14px;background:#E4E4E4"></div>
<div style="position:absolute;left:430px;top:456px;width:1px;height:14px;background:#E4E4E4"></div>
<div style="position:absolute;left:444px;top:456px;width:1px;height:14px;background:#E4E4E4"></div>
<div style="position:absolute;left:458px;top:456px;width:1px;height:14px;background:#E4E4E4"></div>
<div style="position:absolute;left:478px;top:456px;width:1px;height:14px;background:#E4E4E4"></div>
<div style="position:absolute;left:500px;top:456px;width:1px;height:14px;background:#E4E4E4"></div>
<div style="position:absolute;left:521px;top:456px;width:1px;height:14px;background:#E4E4E4"></div>
<div style="position:absolute;left:542px;top:456px;width:1px;height:14px;background:#E4E4E4"></div>
<div style="position:absolute;left:562px;top:456px;width:1px;height:14px;background:#E4E4E4"></div>
<div style="position:absolute;left:584px;top:456px;width:1px;height:14px;background:#E4E4E4"></div>
<div style="position:absolute;left:604px;top:456px;width:1px;height:14px;background:#E4E4E4"></div>
<div style="position:absolute;left:626px;top:456px;width:1px;height:14px;background:#E4E4E4"></div>
<div style="position:absolute;left:646px;top:456px;width:1px;height:14px;background:#E4E4E4"></div>
<div style="position:absolute;left:668px;top:456px;width:1px;height:14px;background:#E4E4E4"></div>
<div style="position:absolute;left:688px;top:456px;width:1px;height:14px;background:#E4E4E4"></div>
<div style="position:absolute;left:710px;top:456px;width:1px;height:14px;background:#E4E4E4"></div>
<div style="position:absolute;left:730px;top:456px;width:1px;height:14px;background:#E4E4E4"></div>
<div style="position:absolute;left:752px;top:456px;width:1px;height:14px;background:#E4E4E4"></div>
<div style="position:absolute;left:772px;top:456px;width:1px;height:14px;background:#E4E4E4"></div>
<div style="position:absolute;left:794px;top:456px;width:1px;height:14px;background:#E4E4E4"></div>
<div style="position:absolute;left:814px;top:456px;width:1px;height:14px;background:#E4E4E4"></div>
<div style="position:absolute;left:836px;top:456px;width:1px;height:14px;background:#E4E4E4"></div>
<div style="position:absolute;left:856px;top:456px;width:1px;height:14px;background:#E4E4E4"></div>
<div style="position:absolute;left:262px;top:470px;width:1px;height:9px;background:#E4E4E4"></div>
<div style="position:absolute;left:282px;top:470px;width:1px;height:9px;background:#E4E4E4"></div>
<div style="position:absolute;left:304px;top:470px;width:1px;height:9px;background:#E4E4E4"></div>
<div style="position:absolute;left:318px;top:470px;width:1px;height:9px;background:#E4E4E4"></div>
<div style="position:absolute;left:332px;top:470px;width:1px;height:9px;background:#E4E4E4"></div>
<div style="position:absolute;left:346px;top:470px;width:1px;height:9px;background:#E4E4E4"></div>
<div style="position:absolute;left:360px;top:470px;width:1px;height:9px;background:#E4E4E4"></div>
<div style="position:absolute;left:374px;top:470px;width:1px;height:9px;background:#E4E4E4"></div>
<div style="position:absolute;left:388px;top:470px;width:1px;height:9px;background:#E4E4E4"></div>
<div style="position:absolute;left:402px;top:470px;width:1px;height:9px;background:#E4E4E4"></div>
<div style="position:absolute;left:416px;top:470px;width:1px;height:9px;background:#E4E4E4"></div>
<div style="position:absolute;left:430px;top:470px;width:1px;height:9px;background:#E4E4E4"></div>
<div style="position:absolute;left:444px;top:470px;width:1px;height:9px;background:#E4E4E4"></div>
<div style="position:absolute;left:458px;top:470px;width:1px;height:9px;background:#E4E4E4"></div>
<div style="position:absolute;left:478px;top:470px;width:1px;height:9px;background:#E4E4E4"></div>
<div style="position:absolute;left:500px;top:470px;width:1px;height:9px;background:#E4E4E4"></div>
<div style="position:absolute;left:521px;top:470px;width:1px;height:9px;background:#E4E4E4"></div>
<div style="position:absolute;left:542px;top:470px;width:1px;height:9px;background:#E4E4E4"></div>
<div style="position:absolute;left:562px;top:470px;width:1px;height:9px;background:#E4E4E4"></div>
<div style="position:absolute;left:584px;top:470px;width:1px;height:9px;background:#E4E4E4"></div>
<div style="position:absolute;left:604px;top:470px;width:1px;height:9px;background:#E4E4E4"></div>
<div style="position:absolute;left:626px;top:470px;width:1px;height:9px;background:#E4E4E4"></div>
<div style="position:absolute;left:646px;top:470px;width:1px;height:9px;background:#E4E4E4"></div>
<div style="position:absolute;left:668px;top:470px;width:1px;height:9px;background:#E4E4E4"></div>
<div style="position:absolute;left:688px;top:470px;width:1px;height:9px;background:#E4E4E4"></div>
<div style="position:absolute;left:710px;top:470px;width:1px;height:9px;background:#E4E4E4"></div>
<div style="position:absolute;left:730px;top:470px;width:1px;height:9px;background:#E4E4E4"></div>
<div style="position:absolute;left:752px;top:470px;width:1px;height:9px;background:#E4E4E4"></div>
<div style="position:absolute;left:772px;top:470px;width:1px;height:9px;background:#E4E4E4"></div>
<div style="position:absolute;left:794px;top:470px;width:1px;height:9px;background:#E4E4E4"></div>
<div style="position:absolute;left:814px;top:470px;width:1px;height:9px;background:#E4E4E4"></div>
<div style="position:absolute;left:836px;top:470px;width:1px;height:9px;background:#E4E4E4"></div>
<div style="position:absolute;left:856px;top:470px;width:1px;height:9px;background:#E4E4E4"></div>
<div style="position:absolute;left:856px;top:479px;width:1px;height:14px;background:#E4E4E4"></div>
<div style="position:absolute;left:856px;top:493px;width:1px;height:17px;background:#E4E4E4"></div>
<div style="position:absolute;left:262px;top:510px;width:1px;height:13px;background:#E4E4E4"></div>
<div style="position:absolute;left:282px;top:510px;width:1px;height:13px;background:#E4E4E4"></div>
<div style="position:absolute;left:304px;top:510px;width:1px;height:13px;background:#E4E4E4"></div>
<div style="position:absolute;left:318px;top:510px;width:1px;height:13px;background:#E4E4E4"></div>
<div style="position:absolute;left:332px;top:510px;width:1px;height:13px;background:#E4E4E4"></div>
<div style="position:absolute;left:346px;top:510px;width:1px;height:13px;background:#E4E4E4"></div>
<div style="position:absolute;left:360px;top:510px;width:1px;height:13px;background:#E4E4E4"></div>
<div style="position:absolute;left:374px;top:510px;width:1px;height:13px;background:#E4E4E4"></div>
<div style="position:absolute;left:388px;top:510px;width:1px;height:13px;background:#E4E4E4"></div>
<div style="position:absolute;left:402px;top:510px;width:1px;height:13px;background:#E4E4E4"></div>
<div style="position:absolute;left:416px;top:510px;width:1px;height:13px;background:#E4E4E4"></div>
<div style="position:absolute;left:430px;top:510px;width:1px;height:13px;background:#E4E4E4"></div>
<div style="position:absolute;left:444px;top:510px;width:1px;height:13px;background:#E4E4E4"></div>
<div style="position:absolute;left:458px;top:510px;width:1px;height:13px;background:#E4E4E4"></div>
<div style="position:absolute;left:478px;top:510px;width:1px;height:13px;background:#E4E4E4"></div>
<div style="position:absolute;left:500px;top:510px;width:1px;height:13px;background:#E4E4E4"></div>
<div style="position:absolute;left:521px;top:510px;width:1px;height:13px;background:#E4E4E4"></div>
<div style="position:absolute;left:542px;top:510px;width:1px;height:13px;background:#E4E4E4"></div>
<div style="position:absolute;left:562px;top:510px;width:1px;height:13px;background:#E4E4E4"></div>
<div style="position:absolute;left:584px;top:510px;width:1px;height:13px;background:#E4E4E4"></div>
<div style="position:absolute;left:604px;top:510px;width:1px;height:13px;background:#E4E4E4"></div>
<div style="position:absolute;left:626px;top:510px;width:1px;height:13px;background:#E4E4E4"></div>
<div style="position:absolute;left:646px;top:510px;width:1px;height:13px;background:#E4E4E4"></div>
<div style="position:absolute;left:668px;top:510px;width:1px;height:13px;background:#E4E4E4"></div>
<div style="position:absolute;left:688px;top:510px;width:1px;height:13px;background:#E4E4E4"></div>
<div style="position:absolute;left:710px;top:510px;width:1px;height:13px;background:#E4E4E4"></div>
<div style="position:absolute;left:730px;top:510px;width:1px;height:13px;background:#E4E4E4"></div>
<div style="position:absolute;left:752px;top:510px;width:1px;height:13px;background:#E4E4E4"></div>
<div style="position:absolute;left:772px;top:510px;width:1px;height:13px;background:#E4E4E4"></div>
<div style="position:absolute;left:794px;top:510px;width:1px;height:13px;background:#E4E4E4"></div>
<div style="position:absolute;left:814px;top:510px;width:1px;height:13px;background:#E4E4E4"></div>
<div style="position:absolute;left:836px;top:510px;width:1px;height:13px;background:#E4E4E4"></div>
<div style="position:absolute;left:856px;top:510px;width:1px;height:13px;background:#E4E4E4"></div>
<div style="position:absolute;left:262px;top:523px;width:1px;height:10px;background:#E4E4E4"></div>
<div style="position:absolute;left:282px;top:523px;width:1px;height:10px;background:#E4E4E4"></div>
<div style="position:absolute;left:304px;top:523px;width:1px;height:10px;background:#E4E4E4"></div>
<div style="position:absolute;left:318px;top:523px;width:1px;height:10px;background:#E4E4E4"></div>
<div style="position:absolute;left:332px;top:523px;width:1px;height:10px;background:#E4E4E4"></div>
<div style="position:absolute;left:346px;top:523px;width:1px;height:10px;background:#E4E4E4"></div>
<div style="position:absolute;left:360px;top:523px;width:1px;height:10px;background:#E4E4E4"></div>
<div style="position:absolute;left:374px;top:523px;width:1px;height:10px;background:#E4E4E4"></div>
<div style="position:absolute;left:388px;top:523px;width:1px;height:10px;background:#E4E4E4"></div>
<div style="position:absolute;left:402px;top:523px;width:1px;height:10px;background:#E4E4E4"></div>
<div style="position:absolute;left:416px;top:523px;width:1px;height:10px;background:#E4E4E4"></div>
<div style="position:absolute;left:430px;top:523px;width:1px;height:10px;background:#E4E4E4"></div>
<div style="position:absolute;left:444px;top:523px;width:1px;height:10px;background:#E4E4E4"></div>
<div style="position:absolute;left:458px;top:523px;width:1px;height:10px;background:#E4E4E4"></div>
<div style="position:absolute;left:478px;top:523px;width:1px;height:10px;background:#E4E4E4"></div>
<div style="position:absolute;left:500px;top:523px;width:1px;height:10px;background:#E4E4E4"></div>
<div style="position:absolute;left:521px;top:523px;width:1px;height:10px;background:#E4E4E4"></div>
<div style="position:absolute;left:542px;top:523px;width:1px;height:10px;background:#E4E4E4"></div>
<div style="position:absolute;left:562px;top:523px;width:1px;height:10px;background:#E4E4E4"></div>
<div style="position:absolute;left:584px;top:523px;width:1px;height:10px;background:#E4E4E4"></div>
<div style="position:absolute;left:604px;top:523px;width:1px;height:10px;background:#E4E4E4"></div>
<div style="position:absolute;left:626px;top:523px;width:1px;height:10px;background:#E4E4E4"></div>
<div style="position:absolute;left:646px;top:523px;width:1px;height:10px;background:#E4E4E4"></div>
<div style="position:absolute;left:668px;top:523px;width:1px;height:10px;background:#E4E4E4"></div>
<div style="position:absolute;left:688px;top:523px;width:1px;height:10px;background:#E4E4E4"></div>
<div style="position:absolute;left:710px;top:523px;width:1px;height:10px;background:#E4E4E4"></div>
<div style="position:absolute;left:730px;top:523px;width:1px;height:10px;background:#E4E4E4"></div>
<div style="position:absolute;left:752px;top:523px;width:1px;height:10px;background:#E4E4E4"></div>
<div style="position:absolute;left:772px;top:523px;width:1px;height:10px;background:#E4E4E4"></div>
<div style="position:absolute;left:794px;top:523px;width:1px;height:10px;background:#E4E4E4"></div>
<div style="position:absolute;left:814px;top:523px;width:1px;height:10px;background:#E4E4E4"></div>
<div style="position:absolute;left:836px;top:523px;width:1px;height:10px;background:#E4E4E4"></div>
<div style="position:absolute;left:856px;top:523px;width:1px;height:10px;background:#E4E4E4"></div>
<div style="position:absolute;left:262px;top:533px;width:1px;height:14px;background:#E4E4E4"></div>
<div style="position:absolute;left:282px;top:533px;width:1px;height:14px;background:#E4E4E4"></div>
<div style="position:absolute;left:304px;top:533px;width:1px;height:14px;background:#E4E4E4"></div>
<div style="position:absolute;left:318px;top:533px;width:1px;height:14px;background:#E4E4E4"></div>
<div style="position:absolute;left:332px;top:533px;width:1px;height:14px;background:#E4E4E4"></div>
<div style="position:absolute;left:346px;top:533px;width:1px;height:14px;background:#E4E4E4"></div>
<div style="position:absolute;left:360px;top:533px;width:1px;height:14px;background:#E4E4E4"></div>
<div style="position:absolute;left:374px;top:533px;width:1px;height:14px;background:#E4E4E4"></div>
<div style="position:absolute;left:388px;top:533px;width:1px;height:14px;background:#E4E4E4"></div>
<div style="position:absolute;left:402px;top:533px;width:1px;height:14px;background:#E4E4E4"></div>
<div style="position:absolute;left:416px;top:533px;width:1px;height:14px;background:#E4E4E4"></div>
<div style="position:absolute;left:430px;top:533px;width:1px;height:14px;background:#E4E4E4"></div>
<div style="position:absolute;left:444px;top:533px;width:1px;height:14px;background:#E4E4E4"></div>
<div style="position:absolute;left:458px;top:533px;width:1px;height:14px;background:#E4E4E4"></div>
<div style="position:absolute;left:478px;top:533px;width:1px;height:14px;background:#E4E4E4"></div>
<div style="position:absolute;left:500px;top:533px;width:1px;height:14px;background:#E4E4E4"></div>
<div style="position:absolute;left:521px;top:533px;width:1px;height:14px;background:#E4E4E4"></div>
<div style="position:absolute;left:542px;top:533px;width:1px;height:14px;background:#E4E4E4"></div>
<div style="position:absolute;left:562px;top:533px;width:1px;height:14px;background:#E4E4E4"></div>
<div style="position:absolute;left:584px;top:533px;width:1px;height:14px;background:#E4E4E4"></div>
<div style="position:absolute;left:604px;top:533px;width:1px;height:14px;background:#E4E4E4"></div>
<div style="position:absolute;left:626px;top:533px;width:1px;height:14px;background:#E4E4E4"></div>
<div style="position:absolute;left:646px;top:533px;width:1px;height:14px;background:#E4E4E4"></div>
<div style="position:absolute;left:668px;top:533px;width:1px;height:14px;background:#E4E4E4"></div>
<div style="position:absolute;left:688px;top:533px;width:1px;height:14px;background:#E4E4E4"></div>
<div style="position:absolute;left:710px;top:533px;width:1px;height:14px;background:#E4E4E4"></div>
<div style="position:absolute;left:730px;top:533px;width:1px;height:14px;background:#E4E4E4"></div>
<div style="position:absolute;left:752px;top:533px;width:1px;height:14px;background:#E4E4E4"></div>
<div style="position:absolute;left:772px;top:533px;width:1px;height:14px;background:#E4E4E4"></div>
<div style="position:absolute;left:794px;top:533px;width:1px;height:14px;background:#E4E4E4"></div>
<div style="position:absolute;left:814px;top:533px;width:1px;height:14px;background:#E4E4E4"></div>
<div style="position:absolute;left:836px;top:533px;width:1px;height:14px;background:#E4E4E4"></div>
<div style="position:absolute;left:856px;top:533px;width:1px;height:14px;background:#E4E4E4"></div>
<div style="position:absolute;left:262px;top:547px;width:1px;height:16px;background:#E4E4E4"></div>
<div style="position:absolute;left:282px;top:547px;width:1px;height:16px;background:#E4E4E4"></div>
<div style="position:absolute;left:304px;top:547px;width:1px;height:16px;background:#E4E4E4"></div>
<div style="position:absolute;left:318px;top:547px;width:1px;height:16px;background:#E4E4E4"></div>
<div style="position:absolute;left:332px;top:547px;width:1px;height:16px;background:#E4E4E4"></div>
<div style="position:absolute;left:346px;top:547px;width:1px;height:16px;background:#E4E4E4"></div>
<div style="position:absolute;left:360px;top:547px;width:1px;height:16px;background:#E4E4E4"></div>
<div style="position:absolute;left:374px;top:547px;width:1px;height:16px;background:#E4E4E4"></div>
<div style="position:absolute;left:388px;top:547px;width:1px;height:16px;background:#E4E4E4"></div>
<div style="position:absolute;left:402px;top:547px;width:1px;height:16px;background:#E4E4E4"></div>
<div style="position:absolute;left:416px;top:547px;width:1px;height:16px;background:#E4E4E4"></div>
<div style="position:absolute;left:430px;top:547px;width:1px;height:16px;background:#E4E4E4"></div>
<div style="position:absolute;left:444px;top:547px;width:1px;height:16px;background:#E4E4E4"></div>
<div style="position:absolute;left:458px;top:547px;width:1px;height:16px;background:#E4E4E4"></div>
<div style="position:absolute;left:478px;top:547px;width:1px;height:16px;background:#E4E4E4"></div>
<div style="position:absolute;left:500px;top:547px;width:1px;height:16px;background:#E4E4E4"></div>
<div style="position:absolute;left:521px;top:547px;width:1px;height:16px;background:#E4E4E4"></div>
<div style="position:absolute;left:542px;top:547px;width:1px;height:16px;background:#E4E4E4"></div>
<div style="position:absolute;left:562px;top:547px;width:1px;height:16px;background:#E4E4E4"></div>
<div style="position:absolute;left:584px;top:547px;width:1px;height:16px;background:#E4E4E4"></div>
<div style="position:absolute;left:604px;top:547px;width:1px;height:16px;background:#E4E4E4"></div>
<div style="position:absolute;left:626px;top:547px;width:1px;height:16px;background:#E4E4E4"></div>
<div style="position:absolute;left:646px;top:547px;width:1px;height:16px;background:#E4E4E4"></div>
<div style="position:absolute;left:668px;top:547px;width:1px;height:16px;background:#E4E4E4"></div>
<div style="position:absolute;left:688px;top:547px;width:1px;height:16px;background:#E4E4E4"></div>
<div style="position:absolute;left:710px;top:547px;width:1px;height:16px;background:#E4E4E4"></div>
<div style="position:absolute;left:730px;top:547px;width:1px;height:16px;background:#E4E4E4"></div>
<div style="position:absolute;left:752px;top:547px;width:1px;height:16px;background:#E4E4E4"></div>
<div style="position:absolute;left:772px;top:547px;width:1px;height:16px;background:#E4E4E4"></div>
<div style="position:absolute;left:794px;top:547px;width:1px;height:16px;background:#E4E4E4"></div>
<div style="position:absolute;left:814px;top:547px;width:1px;height:16px;background:#E4E4E4"></div>
<div style="position:absolute;left:836px;top:547px;width:1px;height:16px;background:#E4E4E4"></div>
<div style="position:absolute;left:856px;top:547px;width:1px;height:16px;background:#E4E4E4"></div>
<div style="position:absolute;left:262px;top:563px;width:1px;height:14px;background:#E4E4E4"></div>
<div style="position:absolute;left:282px;top:563px;width:1px;height:14px;background:#E4E4E4"></div>
<div style="position:absolute;left:304px;top:563px;width:1px;height:14px;background:#E4E4E4"></div>
<div style="position:absolute;left:318px;top:563px;width:1px;height:14px;background:#E4E4E4"></div>
<div style="position:absolute;left:332px;top:563px;width:1px;height:14px;background:#E4E4E4"></div>
<div style="position:absolute;left:346px;top:563px;width:1px;height:14px;background:#E4E4E4"></div>
<div style="position:absolute;left:360px;top:563px;width:1px;height:14px;background:#E4E4E4"></div>
<div style="position:absolute;left:374px;top:563px;width:1px;height:14px;background:#E4E4E4"></div>
<div style="position:absolute;left:388px;top:563px;width:1px;height:14px;background:#E4E4E4"></div>
<div style="position:absolute;left:402px;top:563px;width:1px;height:14px;background:#E4E4E4"></div>
<div style="position:absolute;left:416px;top:563px;width:1px;height:14px;background:#E4E4E4"></div>
<div style="position:absolute;left:430px;top:563px;width:1px;height:14px;background:#E4E4E4"></div>
<div style="position:absolute;left:444px;top:563px;width:1px;height:14px;background:#E4E4E4"></div>
<div style="position:absolute;left:458px;top:563px;width:1px;height:14px;background:#E4E4E4"></div>
<div style="position:absolute;left:478px;top:563px;width:1px;height:14px;background:#E4E4E4"></div>
<div style="position:absolute;left:500px;top:563px;width:1px;height:14px;background:#E4E4E4"></div>
<div style="position:absolute;left:521px;top:563px;width:1px;height:14px;background:#E4E4E4"></div>
<div style="position:absolute;left:542px;top:563px;width:1px;height:14px;background:#E4E4E4"></div>
<div style="position:absolute;left:562px;top:563px;width:1px;height:14px;background:#E4E4E4"></div>
<div style="position:absolute;left:584px;top:563px;width:1px;height:14px;background:#E4E4E4"></div>
<div style="position:absolute;left:604px;top:563px;width:1px;height:14px;background:#E4E4E4"></div>
<div style="position:absolute;left:626px;top:563px;width:1px;height:14px;background:#E4E4E4"></div>
<div style="position:absolute;left:646px;top:563px;width:1px;height:14px;background:#E4E4E4"></div>
<div style="position:absolute;left:668px;top:563px;width:1px;height:14px;background:#E4E4E4"></div>
<div style="position:absolute;left:688px;top:563px;width:1px;height:14px;background:#E4E4E4"></div>
<div style="position:absolute;left:710px;top:563px;width:1px;height:14px;background:#E4E4E4"></div>
<div style="position:absolute;left:730px;top:563px;width:1px;height:14px;background:#E4E4E4"></div>
<div style="position:absolute;left:752px;top:563px;width:1px;height:14px;background:#E4E4E4"></div>
<div style="position:absolute;left:772px;top:563px;width:1px;height:14px;background:#E4E4E4"></div>
<div style="position:absolute;left:794px;top:563px;width:1px;height:14px;background:#E4E4E4"></div>
<div style="position:absolute;left:814px;top:563px;width:1px;height:14px;background:#E4E4E4"></div>
<div style="position:absolute;left:836px;top:563px;width:1px;height:14px;background:#E4E4E4"></div>
<div style="position:absolute;left:856px;top:563px;width:1px;height:14px;background:#E4E4E4"></div>
<div style="position:absolute;left:262px;top:577px;width:1px;height:14px;background:#E4E4E4"></div>
<div style="position:absolute;left:282px;top:577px;width:1px;height:14px;background:#E4E4E4"></div>
<div style="position:absolute;left:304px;top:577px;width:1px;height:14px;background:#E4E4E4"></div>
<div style="position:absolute;left:318px;top:577px;width:1px;height:14px;background:#E4E4E4"></div>
<div style="position:absolute;left:332px;top:577px;width:1px;height:14px;background:#E4E4E4"></div>
<div style="position:absolute;left:346px;top:577px;width:1px;height:14px;background:#E4E4E4"></div>
<div style="position:absolute;left:360px;top:577px;width:1px;height:14px;background:#E4E4E4"></div>
<div style="position:absolute;left:374px;top:577px;width:1px;height:14px;background:#E4E4E4"></div>
<div style="position:absolute;left:388px;top:577px;width:1px;height:14px;background:#E4E4E4"></div>
<div style="position:absolute;left:402px;top:577px;width:1px;height:14px;background:#E4E4E4"></div>
<div style="position:absolute;left:416px;top:577px;width:1px;height:14px;background:#E4E4E4"></div>
<div style="position:absolute;left:430px;top:577px;width:1px;height:14px;background:#E4E4E4"></div>
<div style="position:absolute;left:444px;top:577px;width:1px;height:14px;background:#E4E4E4"></div>
<div style="position:absolute;left:458px;top:577px;width:1px;height:14px;background:#E4E4E4"></div>
<div style="position:absolute;left:478px;top:577px;width:1px;height:14px;background:#E4E4E4"></div>
<div style="position:absolute;left:500px;top:577px;width:1px;height:14px;background:#E4E4E4"></div>
<div style="position:absolute;left:521px;top:577px;width:1px;height:14px;background:#E4E4E4"></div>
<div style="position:absolute;left:542px;top:577px;width:1px;height:14px;background:#E4E4E4"></div>
<div style="position:absolute;left:562px;top:577px;width:1px;height:14px;background:#E4E4E4"></div>
<div style="position:absolute;left:584px;top:577px;width:1px;height:14px;background:#E4E4E4"></div>
<div style="position:absolute;left:604px;top:577px;width:1px;height:14px;background:#E4E4E4"></div>
<div style="position:absolute;left:626px;top:577px;width:1px;height:14px;background:#E4E4E4"></div>
<div style="position:absolute;left:646px;top:577px;width:1px;height:14px;background:#E4E4E4"></div>
<div style="position:absolute;left:668px;top:577px;width:1px;height:14px;background:#E4E4E4"></div>
<div style="position:absolute;left:688px;top:577px;width:1px;height:14px;background:#E4E4E4"></div>
<div style="position:absolute;left:710px;top:577px;width:1px;height:14px;background:#E4E4E4"></div>
<div style="position:absolute;left:730px;top:577px;width:1px;height:14px;background:#E4E4E4"></div>
<div style="position:absolute;left:752px;top:577px;width:1px;height:14px;background:#E4E4E4"></div>
<div style="position:absolute;left:772px;top:577px;width:1px;height:14px;background:#E4E4E4"></div>
<div style="position:absolute;left:794px;top:577px;width:1px;height:14px;background:#E4E4E4"></div>
<div style="position:absolute;left:814px;top:577px;width:1px;height:14px;background:#E4E4E4"></div>
<div style="position:absolute;left:836px;top:577px;width:1px;height:14px;background:#E4E4E4"></div>
<div style="position:absolute;left:856px;top:577px;width:1px;height:14px;background:#E4E4E4"></div>
<div style="position:absolute;left:262px;top:591px;width:1px;height:13px;background:#E4E4E4"></div>
<div style="position:absolute;left:282px;top:591px;width:1px;height:13px;background:#E4E4E4"></div>
<div style="position:absolute;left:304px;top:591px;width:1px;height:13px;background:#E4E4E4"></div>
<div style="position:absolute;left:318px;top:591px;width:1px;height:13px;background:#E4E4E4"></div>
<div style="position:absolute;left:332px;top:591px;width:1px;height:13px;background:#E4E4E4"></div>
<div style="position:absolute;left:346px;top:591px;width:1px;height:13px;background:#E4E4E4"></div>
<div style="position:absolute;left:360px;top:591px;width:1px;height:13px;background:#E4E4E4"></div>
<div style="position:absolute;left:374px;top:591px;width:1px;height:13px;background:#E4E4E4"></div>
<div style="position:absolute;left:388px;top:591px;width:1px;height:13px;background:#E4E4E4"></div>
<div style="position:absolute;left:402px;top:591px;width:1px;height:13px;background:#E4E4E4"></div>
<div style="position:absolute;left:416px;top:591px;width:1px;height:13px;background:#E4E4E4"></div>
<div style="position:absolute;left:430px;top:591px;width:1px;height:13px;background:#E4E4E4"></div>
<div style="position:absolute;left:444px;top:591px;width:1px;height:13px;background:#E4E4E4"></div>
<div style="position:absolute;left:458px;top:591px;width:1px;height:13px;background:#E4E4E4"></div>
<div style="position:absolute;left:478px;top:591px;width:1px;height:13px;background:#E4E4E4"></div>
<div style="position:absolute;left:500px;top:591px;width:1px;height:13px;background:#E4E4E4"></div>
<div style="position:absolute;left:521px;top:591px;width:1px;height:13px;background:#E4E4E4"></div>
<div style="position:absolute;left:542px;top:591px;width:1px;height:13px;background:#E4E4E4"></div>
<div style="position:absolute;left:562px;top:591px;width:1px;height:13px;background:#E4E4E4"></div>
<div style="position:absolute;left:584px;top:591px;width:1px;height:13px;background:#E4E4E4"></div>
<div style="position:absolute;left:604px;top:591px;width:1px;height:13px;background:#E4E4E4"></div>
<div style="position:absolute;left:626px;top:591px;width:1px;height:13px;background:#E4E4E4"></div>
<div style="position:absolute;left:646px;top:591px;width:1px;height:13px;background:#E4E4E4"></div>
<div style="position:absolute;left:668px;top:591px;width:1px;height:13px;background:#E4E4E4"></div>
<div style="position:absolute;left:688px;top:591px;width:1px;height:13px;background:#E4E4E4"></div>
<div style="position:absolute;left:710px;top:591px;width:1px;height:13px;background:#E4E4E4"></div>
<div style="position:absolute;left:730px;top:591px;width:1px;height:13px;background:#E4E4E4"></div>
<div style="position:absolute;left:752px;top:591px;width:1px;height:13px;background:#E4E4E4"></div>
<div style="position:absolute;left:772px;top:591px;width:1px;height:13px;background:#E4E4E4"></div>
<div style="position:absolute;left:794px;top:591px;width:1px;height:13px;background:#E4E4E4"></div>
<div style="position:absolute;left:814px;top:591px;width:1px;height:13px;background:#E4E4E4"></div>
<div style="position:absolute;left:836px;top:591px;width:1px;height:13px;background:#E4E4E4"></div>
<div style="position:absolute;left:856px;top:591px;width:1px;height:13px;background:#E4E4E4"></div>
<div style="position:absolute;left:262px;top:604px;width:1px;height:14px;background:#E4E4E4"></div>
<div style="position:absolute;left:282px;top:604px;width:1px;height:14px;background:#E4E4E4"></div>
<div style="position:absolute;left:304px;top:604px;width:1px;height:14px;background:#E4E4E4"></div>
<div style="position:absolute;left:318px;top:604px;width:1px;height:14px;background:#E4E4E4"></div>
<div style="position:absolute;left:332px;top:604px;width:1px;height:14px;background:#E4E4E4"></div>
<div style="position:absolute;left:346px;top:604px;width:1px;height:14px;background:#E4E4E4"></div>
<div style="position:absolute;left:360px;top:604px;width:1px;height:14px;background:#E4E4E4"></div>
<div style="position:absolute;left:374px;top:604px;width:1px;height:14px;background:#E4E4E4"></div>
<div style="position:absolute;left:388px;top:604px;width:1px;height:14px;background:#E4E4E4"></div>
<div style="position:absolute;left:402px;top:604px;width:1px;height:14px;background:#E4E4E4"></div>
<div style="position:absolute;left:416px;top:604px;width:1px;height:14px;background:#E4E4E4"></div>
<div style="position:absolute;left:430px;top:604px;width:1px;height:14px;background:#E4E4E4"></div>
<div style="position:absolute;left:444px;top:604px;width:1px;height:14px;background:#E4E4E4"></div>
<div style="position:absolute;left:458px;top:604px;width:1px;height:14px;background:#E4E4E4"></div>
<div style="position:absolute;left:478px;top:604px;width:1px;height:14px;background:#E4E4E4"></div>
<div style="position:absolute;left:500px;top:604px;width:1px;height:14px;background:#E4E4E4"></div>
<div style="position:absolute;left:521px;top:604px;width:1px;height:14px;background:#E4E4E4"></div>
<div style="position:absolute;left:542px;top:604px;width:1px;height:14px;background:#E4E4E4"></div>
<div style="position:absolute;left:562px;top:604px;width:1px;height:14px;background:#E4E4E4"></div>
<div style="position:absolute;left:584px;top:604px;width:1px;height:14px;background:#E4E4E4"></div>
<div style="position:absolute;left:604px;top:604px;width:1px;height:14px;background:#E4E4E4"></div>
<div style="position:absolute;left:626px;top:604px;width:1px;height:14px;background:#E4E4E4"></div>
<div style="position:absolute;left:646px;top:604px;width:1px;height:14px;background:#E4E4E4"></div>
<div style="position:absolute;left:668px;top:604px;width:1px;height:14px;background:#E4E4E4"></div>
<div style="position:absolute;left:688px;top:604px;width:1px;height:14px;background:#E4E4E4"></div>
<div style="position:absolute;left:710px;top:604px;width:1px;height:14px;background:#E4E4E4"></div>
<div style="position:absolute;left:730px;top:604px;width:1px;height:14px;background:#E4E4E4"></div>
<div style="position:absolute;left:752px;top:604px;width:1px;height:14px;background:#E4E4E4"></div>
<div style="position:absolute;left:772px;top:604px;width:1px;height:14px;background:#E4E4E4"></div>
<div style="position:absolute;left:794px;top:604px;width:1px;height:14px;background:#E4E4E4"></div>
<div style="position:absolute;left:814px;top:604px;width:1px;height:14px;background:#E4E4E4"></div>
<div style="position:absolute;left:836px;top:604px;width:1px;height:14px;background:#E4E4E4"></div>
<div style="position:absolute;left:856px;top:604px;width:1px;height:14px;background:#E4E4E4"></div>
<div style="position:absolute;left:262px;top:618px;width:1px;height:13px;background:#E4E4E4"></div>
<div style="position:absolute;left:282px;top:618px;width:1px;height:13px;background:#E4E4E4"></div>
<div style="position:absolute;left:304px;top:618px;width:1px;height:13px;background:#E4E4E4"></div>
<div style="position:absolute;left:318px;top:618px;width:1px;height:13px;background:#E4E4E4"></div>
<div style="position:absolute;left:332px;top:618px;width:1px;height:13px;background:#E4E4E4"></div>
<div style="position:absolute;left:346px;top:618px;width:1px;height:13px;background:#E4E4E4"></div>
<div style="position:absolute;left:360px;top:618px;width:1px;height:13px;background:#E4E4E4"></div>
<div style="position:absolute;left:374px;top:618px;width:1px;height:13px;background:#E4E4E4"></div>
<div style="position:absolute;left:388px;top:618px;width:1px;height:13px;background:#E4E4E4"></div>
<div style="position:absolute;left:402px;top:618px;width:1px;height:13px;background:#E4E4E4"></div>
<div style="position:absolute;left:416px;top:618px;width:1px;height:13px;background:#E4E4E4"></div>
<div style="position:absolute;left:430px;top:618px;width:1px;height:13px;background:#E4E4E4"></div>
<div style="position:absolute;left:444px;top:618px;width:1px;height:13px;background:#E4E4E4"></div>
<div style="position:absolute;left:458px;top:618px;width:1px;height:13px;background:#E4E4E4"></div>
<div style="position:absolute;left:478px;top:618px;width:1px;height:13px;background:#E4E4E4"></div>
<div style="position:absolute;left:500px;top:618px;width:1px;height:13px;background:#E4E4E4"></div>
<div style="position:absolute;left:521px;top:618px;width:1px;height:13px;background:#E4E4E4"></div>
<div style="position:absolute;left:542px;top:618px;width:1px;height:13px;background:#E4E4E4"></div>
<div style="position:absolute;left:562px;top:618px;width:1px;height:13px;background:#E4E4E4"></div>
<div style="position:absolute;left:584px;top:618px;width:1px;height:13px;background:#E4E4E4"></div>
<div style="position:absolute;left:604px;top:618px;width:1px;height:13px;background:#E4E4E4"></div>
<div style="position:absolute;left:626px;top:618px;width:1px;height:13px;background:#E4E4E4"></div>
<div style="position:absolute;left:646px;top:618px;width:1px;height:13px;background:#E4E4E4"></div>
<div style="position:absolute;left:668px;top:618px;width:1px;height:13px;background:#E4E4E4"></div>
<div style="position:absolute;left:688px;top:618px;width:1px;height:13px;background:#E4E4E4"></div>
<div style="position:absolute;left:710px;top:618px;width:1px;height:13px;background:#E4E4E4"></div>
<div style="position:absolute;left:730px;top:618px;width:1px;height:13px;background:#E4E4E4"></div>
<div style="position:absolute;left:752px;top:618px;width:1px;height:13px;background:#E4E4E4"></div>
<div style="position:absolute;left:772px;top:618px;width:1px;height:13px;background:#E4E4E4"></div>
<div style="position:absolute;left:794px;top:618px;width:1px;height:13px;background:#E4E4E4"></div>
<div style="position:absolute;left:814px;top:618px;width:1px;height:13px;background:#E4E4E4"></div>
<div style="position:absolute;left:836px;top:618px;width:1px;height:13px;background:#E4E4E4"></div>
<div style="position:absolute;left:856px;top:618px;width:1px;height:13px;background:#E4E4E4"></div>
<div style="position:absolute;left:262px;top:631px;width:1px;height:14px;background:#E4E4E4"></div>
<div style="position:absolute;left:282px;top:631px;width:1px;height:14px;background:#E4E4E4"></div>
<div style="position:absolute;left:304px;top:631px;width:1px;height:14px;background:#E4E4E4"></div>
<div style="position:absolute;left:318px;top:631px;width:1px;height:14px;background:#E4E4E4"></div>
<div style="position:absolute;left:332px;top:631px;width:1px;height:14px;background:#E4E4E4"></div>
<div style="position:absolute;left:346px;top:631px;width:1px;height:14px;background:#E4E4E4"></div>
<div style="position:absolute;left:360px;top:631px;width:1px;height:14px;background:#E4E4E4"></div>
<div style="position:absolute;left:374px;top:631px;width:1px;height:14px;background:#E4E4E4"></div>
<div style="position:absolute;left:388px;top:631px;width:1px;height:14px;background:#E4E4E4"></div>
<div style="position:absolute;left:402px;top:631px;width:1px;height:14px;background:#E4E4E4"></div>
<div style="position:absolute;left:416px;top:631px;width:1px;height:14px;background:#E4E4E4"></div>
<div style="position:absolute;left:430px;top:631px;width:1px;height:14px;background:#E4E4E4"></div>
<div style="position:absolute;left:444px;top:631px;width:1px;height:14px;background:#E4E4E4"></div>
<div style="position:absolute;left:458px;top:631px;width:1px;height:14px;background:#E4E4E4"></div>
<div style="position:absolute;left:478px;top:631px;width:1px;height:14px;background:#E4E4E4"></div>
<div style="position:absolute;left:500px;top:631px;width:1px;height:14px;background:#E4E4E4"></div>
<div style="position:absolute;left:521px;top:631px;width:1px;height:14px;background:#E4E4E4"></div>
<div style="position:absolute;left:542px;top:631px;width:1px;height:14px;background:#E4E4E4"></div>
<div style="position:absolute;left:562px;top:631px;width:1px;height:14px;background:#E4E4E4"></div>
<div style="position:absolute;left:584px;top:631px;width:1px;height:14px;background:#E4E4E4"></div>
<div style="position:absolute;left:604px;top:631px;width:1px;height:14px;background:#E4E4E4"></div>
<div style="position:absolute;left:626px;top:631px;width:1px;height:14px;background:#E4E4E4"></div>
<div style="position:absolute;left:646px;top:631px;width:1px;height:14px;background:#E4E4E4"></div>
<div style="position:absolute;left:668px;top:631px;width:1px;height:14px;background:#E4E4E4"></div>
<div style="position:absolute;left:688px;top:631px;width:1px;height:14px;background:#E4E4E4"></div>
<div style="position:absolute;left:710px;top:631px;width:1px;height:14px;background:#E4E4E4"></div>
<div style="position:absolute;left:730px;top:631px;width:1px;height:14px;background:#E4E4E4"></div>
<div style="position:absolute;left:752px;top:631px;width:1px;height:14px;background:#E4E4E4"></div>
<div style="position:absolute;left:772px;top:631px;width:1px;height:14px;background:#E4E4E4"></div>
<div style="position:absolute;left:794px;top:631px;width:1px;height:14px;background:#E4E4E4"></div>
<div style="position:absolute;left:814px;top:631px;width:1px;height:14px;background:#E4E4E4"></div>
<div style="position:absolute;left:836px;top:631px;width:1px;height:14px;background:#E4E4E4"></div>
<div style="position:absolute;left:856px;top:631px;width:1px;height:14px;background:#E4E4E4"></div>
<div style="position:absolute;left:262px;top:645px;width:1px;height:14px;background:#E4E4E4"></div>
<div style="position:absolute;left:282px;top:645px;width:1px;height:14px;background:#E4E4E4"></div>
<div style="position:absolute;left:304px;top:645px;width:1px;height:14px;background:#E4E4E4"></div>
<div style="position:absolute;left:318px;top:645px;width:1px;height:14px;background:#E4E4E4"></div>
<div style="position:absolute;left:332px;top:645px;width:1px;height:14px;background:#E4E4E4"></div>
<div style="position:absolute;left:346px;top:645px;width:1px;height:14px;background:#E4E4E4"></div>
<div style="position:absolute;left:360px;top:645px;width:1px;height:14px;background:#E4E4E4"></div>
<div style="position:absolute;left:374px;top:645px;width:1px;height:14px;background:#E4E4E4"></div>
<div style="position:absolute;left:388px;top:645px;width:1px;height:14px;background:#E4E4E4"></div>
<div style="position:absolute;left:402px;top:645px;width:1px;height:14px;background:#E4E4E4"></div>
<div style="position:absolute;left:416px;top:645px;width:1px;height:14px;background:#E4E4E4"></div>
<div style="position:absolute;left:430px;top:645px;width:1px;height:14px;background:#E4E4E4"></div>
<div style="position:absolute;left:444px;top:645px;width:1px;height:14px;background:#E4E4E4"></div>
<div style="position:absolute;left:458px;top:645px;width:1px;height:14px;background:#E4E4E4"></div>
<div style="position:absolute;left:478px;top:645px;width:1px;height:14px;background:#E4E4E4"></div>
<div style="position:absolute;left:500px;top:645px;width:1px;height:14px;background:#E4E4E4"></div>
<div style="position:absolute;left:521px;top:645px;width:1px;height:14px;background:#E4E4E4"></div>
<div style="position:absolute;left:542px;top:645px;width:1px;height:14px;background:#E4E4E4"></div>
<div style="position:absolute;left:562px;top:645px;width:1px;height:14px;background:#E4E4E4"></div>
<div style="position:absolute;left:584px;top:645px;width:1px;height:14px;background:#E4E4E4"></div>
<div style="position:absolute;left:604px;top:645px;width:1px;height:14px;background:#E4E4E4"></div>
<div style="position:absolute;left:626px;top:645px;width:1px;height:14px;background:#E4E4E4"></div>
<div style="position:absolute;left:646px;top:645px;width:1px;height:14px;background:#E4E4E4"></div>
<div style="position:absolute;left:668px;top:645px;width:1px;height:14px;background:#E4E4E4"></div>
<div style="position:absolute;left:688px;top:645px;width:1px;height:14px;background:#E4E4E4"></div>
<div style="position:absolute;left:710px;top:645px;width:1px;height:14px;background:#E4E4E4"></div>
<div style="position:absolute;left:730px;top:645px;width:1px;height:14px;background:#E4E4E4"></div>
<div style="position:absolute;left:752px;top:645px;width:1px;height:14px;background:#E4E4E4"></div>
<div style="position:absolute;left:772px;top:645px;width:1px;height:14px;background:#E4E4E4"></div>
<div style="position:absolute;left:794px;top:645px;width:1px;height:14px;background:#E4E4E4"></div>
<div style="position:absolute;left:814px;top:645px;width:1px;height:14px;background:#E4E4E4"></div>
<div style="position:absolute;left:836px;top:645px;width:1px;height:14px;background:#E4E4E4"></div>
<div style="position:absolute;left:856px;top:645px;width:1px;height:14px;background:#E4E4E4"></div>
<div style="position:absolute;left:262px;top:659px;width:1px;height:13px;background:#E4E4E4"></div>
<div style="position:absolute;left:282px;top:659px;width:1px;height:13px;background:#E4E4E4"></div>
<div style="position:absolute;left:304px;top:659px;width:1px;height:13px;background:#E4E4E4"></div>
<div style="position:absolute;left:318px;top:659px;width:1px;height:13px;background:#E4E4E4"></div>
<div style="position:absolute;left:332px;top:659px;width:1px;height:13px;background:#E4E4E4"></div>
<div style="position:absolute;left:346px;top:659px;width:1px;height:13px;background:#E4E4E4"></div>
<div style="position:absolute;left:360px;top:659px;width:1px;height:13px;background:#E4E4E4"></div>
<div style="position:absolute;left:374px;top:659px;width:1px;height:13px;background:#E4E4E4"></div>
<div style="position:absolute;left:388px;top:659px;width:1px;height:13px;background:#E4E4E4"></div>
<div style="position:absolute;left:402px;top:659px;width:1px;height:13px;background:#E4E4E4"></div>
<div style="position:absolute;left:416px;top:659px;width:1px;height:13px;background:#E4E4E4"></div>
<div style="position:absolute;left:430px;top:659px;width:1px;height:13px;background:#E4E4E4"></div>
<div style="position:absolute;left:444px;top:659px;width:1px;height:13px;background:#E4E4E4"></div>
<div style="position:absolute;left:458px;top:659px;width:1px;height:13px;background:#E4E4E4"></div>
<div style="position:absolute;left:478px;top:659px;width:1px;height:13px;background:#E4E4E4"></div>
<div style="position:absolute;left:500px;top:659px;width:1px;height:13px;background:#E4E4E4"></div>
<div style="position:absolute;left:521px;top:659px;width:1px;height:13px;background:#E4E4E4"></div>
<div style="position:absolute;left:542px;top:659px;width:1px;height:13px;background:#E4E4E4"></div>
<div style="position:absolute;left:562px;top:659px;width:1px;height:13px;background:#E4E4E4"></div>
<div style="position:absolute;left:584px;top:659px;width:1px;height:13px;background:#E4E4E4"></div>
<div style="position:absolute;left:604px;top:659px;width:1px;height:13px;background:#E4E4E4"></div>
<div style="position:absolute;left:626px;top:659px;width:1px;height:13px;background:#E4E4E4"></div>
<div style="position:absolute;left:646px;top:659px;width:1px;height:13px;background:#E4E4E4"></div>
<div style="position:absolute;left:668px;top:659px;width:1px;height:13px;background:#E4E4E4"></div>
<div style="position:absolute;left:688px;top:659px;width:1px;height:13px;background:#E4E4E4"></div>
<div style="position:absolute;left:710px;top:659px;width:1px;height:13px;background:#E4E4E4"></div>
<div style="position:absolute;left:730px;top:659px;width:1px;height:13px;background:#E4E4E4"></div>
<div style="position:absolute;left:752px;top:659px;width:1px;height:13px;background:#E4E4E4"></div>
<div style="position:absolute;left:772px;top:659px;width:1px;height:13px;background:#E4E4E4"></div>
<div style="position:absolute;left:794px;top:659px;width:1px;height:13px;background:#E4E4E4"></div>
<div style="position:absolute;left:814px;top:659px;width:1px;height:13px;background:#E4E4E4"></div>
<div style="position:absolute;left:836px;top:659px;width:1px;height:13px;background:#E4E4E4"></div>
<div style="position:absolute;left:856px;top:659px;width:1px;height:13px;background:#E4E4E4"></div>
<div style="position:absolute;left:262px;top:672px;width:1px;height:14px;background:#E4E4E4"></div>
<div style="position:absolute;left:282px;top:672px;width:1px;height:14px;background:#E4E4E4"></div>
<div style="position:absolute;left:304px;top:672px;width:1px;height:14px;background:#E4E4E4"></div>
<div style="position:absolute;left:318px;top:672px;width:1px;height:14px;background:#E4E4E4"></div>
<div style="position:absolute;left:332px;top:672px;width:1px;height:14px;background:#E4E4E4"></div>
<div style="position:absolute;left:346px;top:672px;width:1px;height:14px;background:#E4E4E4"></div>
<div style="position:absolute;left:360px;top:672px;width:1px;height:14px;background:#E4E4E4"></div>
<div style="position:absolute;left:374px;top:672px;width:1px;height:14px;background:#E4E4E4"></div>
<div style="position:absolute;left:388px;top:672px;width:1px;height:14px;background:#E4E4E4"></div>
<div style="position:absolute;left:402px;top:672px;width:1px;height:14px;background:#E4E4E4"></div>
<div style="position:absolute;left:416px;top:672px;width:1px;height:14px;background:#E4E4E4"></div>
<div style="position:absolute;left:430px;top:672px;width:1px;height:14px;background:#E4E4E4"></div>
<div style="position:absolute;left:444px;top:672px;width:1px;height:14px;background:#E4E4E4"></div>
<div style="position:absolute;left:458px;top:672px;width:1px;height:14px;background:#E4E4E4"></div>
<div style="position:absolute;left:478px;top:672px;width:1px;height:14px;background:#E4E4E4"></div>
<div style="position:absolute;left:500px;top:672px;width:1px;height:14px;background:#E4E4E4"></div>
<div style="position:absolute;left:521px;top:672px;width:1px;height:14px;background:#E4E4E4"></div>
<div style="position:absolute;left:542px;top:672px;width:1px;height:14px;background:#E4E4E4"></div>
<div style="position:absolute;left:562px;top:672px;width:1px;height:14px;background:#E4E4E4"></div>
<div style="position:absolute;left:584px;top:672px;width:1px;height:14px;background:#E4E4E4"></div>
<div style="position:absolute;left:604px;top:672px;width:1px;height:14px;background:#E4E4E4"></div>
<div style="position:absolute;left:626px;top:672px;width:1px;height:14px;background:#E4E4E4"></div>
<div style="position:absolute;left:646px;top:672px;width:1px;height:14px;background:#E4E4E4"></div>
<div style="position:absolute;left:668px;top:672px;width:1px;height:14px;background:#E4E4E4"></div>
<div style="position:absolute;left:688px;top:672px;width:1px;height:14px;background:#E4E4E4"></div>
<div style="position:absolute;left:710px;top:672px;width:1px;height:14px;background:#E4E4E4"></div>
<div style="position:absolute;left:730px;top:672px;width:1px;height:14px;background:#E4E4E4"></div>
<div style="position:absolute;left:752px;top:672px;width:1px;height:14px;background:#E4E4E4"></div>
<div style="position:absolute;left:772px;top:672px;width:1px;height:14px;background:#E4E4E4"></div>
<div style="position:absolute;left:794px;top:672px;width:1px;height:14px;background:#E4E4E4"></div>
<div style="position:absolute;left:814px;top:672px;width:1px;height:14px;background:#E4E4E4"></div>
<div style="position:absolute;left:836px;top:672px;width:1px;height:14px;background:#E4E4E4"></div>
<div style="position:absolute;left:856px;top:672px;width:1px;height:14px;background:#E4E4E4"></div>
<div style="position:absolute;left:262px;top:686px;width:1px;height:13px;background:#E4E4E4"></div>
<div style="position:absolute;left:282px;top:686px;width:1px;height:13px;background:#E4E4E4"></div>
<div style="position:absolute;left:304px;top:686px;width:1px;height:13px;background:#E4E4E4"></div>
<div style="position:absolute;left:318px;top:686px;width:1px;height:13px;background:#E4E4E4"></div>
<div style="position:absolute;left:332px;top:686px;width:1px;height:13px;background:#E4E4E4"></div>
<div style="position:absolute;left:346px;top:686px;width:1px;height:13px;background:#E4E4E4"></div>
<div style="position:absolute;left:360px;top:686px;width:1px;height:13px;background:#E4E4E4"></div>
<div style="position:absolute;left:374px;top:686px;width:1px;height:13px;background:#E4E4E4"></div>
<div style="position:absolute;left:388px;top:686px;width:1px;height:13px;background:#E4E4E4"></div>
<div style="position:absolute;left:402px;top:686px;width:1px;height:13px;background:#E4E4E4"></div>
<div style="position:absolute;left:416px;top:686px;width:1px;height:13px;background:#E4E4E4"></div>
<div style="position:absolute;left:430px;top:686px;width:1px;height:13px;background:#E4E4E4"></div>
<div style="position:absolute;left:444px;top:686px;width:1px;height:13px;background:#E4E4E4"></div>
<div style="position:absolute;left:458px;top:686px;width:1px;height:13px;background:#E4E4E4"></div>
<div style="position:absolute;left:478px;top:686px;width:1px;height:13px;background:#E4E4E4"></div>
<div style="position:absolute;left:500px;top:686px;width:1px;height:13px;background:#E4E4E4"></div>
<div style="position:absolute;left:521px;top:686px;width:1px;height:13px;background:#E4E4E4"></div>
<div style="position:absolute;left:542px;top:686px;width:1px;height:13px;background:#E4E4E4"></div>
<div style="position:absolute;left:562px;top:686px;width:1px;height:13px;background:#E4E4E4"></div>
<div style="position:absolute;left:584px;top:686px;width:1px;height:13px;background:#E4E4E4"></div>
<div style="position:absolute;left:604px;top:686px;width:1px;height:13px;background:#E4E4E4"></div>
<div style="position:absolute;left:626px;top:686px;width:1px;height:13px;background:#E4E4E4"></div>
<div style="position:absolute;left:646px;top:686px;width:1px;height:13px;background:#E4E4E4"></div>
<div style="position:absolute;left:668px;top:686px;width:1px;height:13px;background:#E4E4E4"></div>
<div style="position:absolute;left:688px;top:686px;width:1px;height:13px;background:#E4E4E4"></div>
<div style="position:absolute;left:710px;top:686px;width:1px;height:13px;background:#E4E4E4"></div>
<div style="position:absolute;left:730px;top:686px;width:1px;height:13px;background:#E4E4E4"></div>
<div style="position:absolute;left:752px;top:686px;width:1px;height:13px;background:#E4E4E4"></div>
<div style="position:absolute;left:772px;top:686px;width:1px;height:13px;background:#E4E4E4"></div>
<div style="position:absolute;left:794px;top:686px;width:1px;height:13px;background:#E4E4E4"></div>
<div style="position:absolute;left:814px;top:686px;width:1px;height:13px;background:#E4E4E4"></div>
<div style="position:absolute;left:836px;top:686px;width:1px;height:13px;background:#E4E4E4"></div>
<div style="position:absolute;left:856px;top:686px;width:1px;height:13px;background:#E4E4E4"></div>
<div style="position:absolute;left:262px;top:699px;width:1px;height:14px;background:#E4E4E4"></div>
<div style="position:absolute;left:282px;top:699px;width:1px;height:14px;background:#E4E4E4"></div>
<div style="position:absolute;left:304px;top:699px;width:1px;height:14px;background:#E4E4E4"></div>
<div style="position:absolute;left:318px;top:699px;width:1px;height:14px;background:#E4E4E4"></div>
<div style="position:absolute;left:332px;top:699px;width:1px;height:14px;background:#E4E4E4"></div>
<div style="position:absolute;left:346px;top:699px;width:1px;height:14px;background:#E4E4E4"></div>
<div style="position:absolute;left:360px;top:699px;width:1px;height:14px;background:#E4E4E4"></div>
<div style="position:absolute;left:374px;top:699px;width:1px;height:14px;background:#E4E4E4"></div>
<div style="position:absolute;left:388px;top:699px;width:1px;height:14px;background:#E4E4E4"></div>
<div style="position:absolute;left:402px;top:699px;width:1px;height:14px;background:#E4E4E4"></div>
<div style="position:absolute;left:416px;top:699px;width:1px;height:14px;background:#E4E4E4"></div>
<div style="position:absolute;left:430px;top:699px;width:1px;height:14px;background:#E4E4E4"></div>
<div style="position:absolute;left:444px;top:699px;width:1px;height:14px;background:#E4E4E4"></div>
<div style="position:absolute;left:458px;top:699px;width:1px;height:14px;background:#E4E4E4"></div>
<div style="position:absolute;left:478px;top:699px;width:1px;height:14px;background:#E4E4E4"></div>
<div style="position:absolute;left:500px;top:699px;width:1px;height:14px;background:#E4E4E4"></div>
<div style="position:absolute;left:521px;top:699px;width:1px;height:14px;background:#E4E4E4"></div>
<div style="position:absolute;left:542px;top:699px;width:1px;height:14px;background:#E4E4E4"></div>
<div style="position:absolute;left:562px;top:699px;width:1px;height:14px;background:#E4E4E4"></div>
<div style="position:absolute;left:584px;top:699px;width:1px;height:14px;background:#E4E4E4"></div>
<div style="position:absolute;left:604px;top:699px;width:1px;height:14px;background:#E4E4E4"></div>
<div style="position:absolute;left:626px;top:699px;width:1px;height:14px;background:#E4E4E4"></div>
<div style="position:absolute;left:646px;top:699px;width:1px;height:14px;background:#E4E4E4"></div>
<div style="position:absolute;left:668px;top:699px;width:1px;height:14px;background:#E4E4E4"></div>
<div style="position:absolute;left:688px;top:699px;width:1px;height:14px;background:#E4E4E4"></div>
<div style="position:absolute;left:710px;top:699px;width:1px;height:14px;background:#E4E4E4"></div>
<div style="position:absolute;left:730px;top:699px;width:1px;height:14px;background:#E4E4E4"></div>
<div style="position:absolute;left:752px;top:699px;width:1px;height:14px;background:#E4E4E4"></div>
<div style="position:absolute;left:772px;top:699px;width:1px;height:14px;background:#E4E4E4"></div>
<div style="position:absolute;left:794px;top:699px;width:1px;height:14px;background:#E4E4E4"></div>
<div style="position:absolute;left:814px;top:699px;width:1px;height:14px;background:#E4E4E4"></div>
<div style="position:absolute;left:836px;top:699px;width:1px;height:14px;background:#E4E4E4"></div>
<div style="position:absolute;left:856px;top:699px;width:1px;height:14px;background:#E4E4E4"></div>
<div style="position:absolute;left:262px;top:713px;width:1px;height:14px;background:#E4E4E4"></div>
<div style="position:absolute;left:282px;top:713px;width:1px;height:14px;background:#E4E4E4"></div>
<div style="position:absolute;left:304px;top:713px;width:1px;height:14px;background:#E4E4E4"></div>
<div style="position:absolute;left:318px;top:713px;width:1px;height:14px;background:#E4E4E4"></div>
<div style="position:absolute;left:332px;top:713px;width:1px;height:14px;background:#E4E4E4"></div>
<div style="position:absolute;left:346px;top:713px;width:1px;height:14px;background:#E4E4E4"></div>
<div style="position:absolute;left:360px;top:713px;width:1px;height:14px;background:#E4E4E4"></div>
<div style="position:absolute;left:374px;top:713px;width:1px;height:14px;background:#E4E4E4"></div>
<div style="position:absolute;left:388px;top:713px;width:1px;height:14px;background:#E4E4E4"></div>
<div style="position:absolute;left:402px;top:713px;width:1px;height:14px;background:#E4E4E4"></div>
<div style="position:absolute;left:416px;top:713px;width:1px;height:14px;background:#E4E4E4"></div>
<div style="position:absolute;left:430px;top:713px;width:1px;height:14px;background:#E4E4E4"></div>
<div style="position:absolute;left:444px;top:713px;width:1px;height:14px;background:#E4E4E4"></div>
<div style="position:absolute;left:458px;top:713px;width:1px;height:14px;background:#E4E4E4"></div>
<div style="position:absolute;left:478px;top:713px;width:1px;height:14px;background:#E4E4E4"></div>
<div style="position:absolute;left:500px;top:713px;width:1px;height:14px;background:#E4E4E4"></div>
<div style="position:absolute;left:521px;top:713px;width:1px;height:14px;background:#E4E4E4"></div>
<div style="position:absolute;left:542px;top:713px;width:1px;height:14px;background:#E4E4E4"></div>
<div style="position:absolute;left:562px;top:713px;width:1px;height:14px;background:#E4E4E4"></div>
<div style="position:absolute;left:584px;top:713px;width:1px;height:14px;background:#E4E4E4"></div>
<div style="position:absolute;left:604px;top:713px;width:1px;height:14px;background:#E4E4E4"></div>
<div style="position:absolute;left:626px;top:713px;width:1px;height:14px;background:#E4E4E4"></div>
<div style="position:absolute;left:646px;top:713px;width:1px;height:14px;background:#E4E4E4"></div>
<div style="position:absolute;left:668px;top:713px;width:1px;height:14px;background:#E4E4E4"></div>
<div style="position:absolute;left:688px;top:713px;width:1px;height:14px;background:#E4E4E4"></div>
<div style="position:absolute;left:710px;top:713px;width:1px;height:14px;background:#E4E4E4"></div>
<div style="position:absolute;left:730px;top:713px;width:1px;height:14px;background:#E4E4E4"></div>
<div style="position:absolute;left:752px;top:713px;width:1px;height:14px;background:#E4E4E4"></div>
<div style="position:absolute;left:772px;top:713px;width:1px;height:14px;background:#E4E4E4"></div>
<div style="position:absolute;left:794px;top:713px;width:1px;height:14px;background:#E4E4E4"></div>
<div style="position:absolute;left:814px;top:713px;width:1px;height:14px;background:#E4E4E4"></div>
<div style="position:absolute;left:836px;top:713px;width:1px;height:14px;background:#E4E4E4"></div>
<div style="position:absolute;left:856px;top:713px;width:1px;height:14px;background:#E4E4E4"></div>
<div style="position:absolute;left:262px;top:727px;width:1px;height:14px;background:#E4E4E4"></div>
<div style="position:absolute;left:282px;top:727px;width:1px;height:14px;background:#E4E4E4"></div>
<div style="position:absolute;left:304px;top:727px;width:1px;height:14px;background:#E4E4E4"></div>
<div style="position:absolute;left:318px;top:727px;width:1px;height:14px;background:#E4E4E4"></div>
<div style="position:absolute;left:332px;top:727px;width:1px;height:14px;background:#E4E4E4"></div>
<div style="position:absolute;left:346px;top:727px;width:1px;height:14px;background:#E4E4E4"></div>
<div style="position:absolute;left:360px;top:727px;width:1px;height:14px;background:#E4E4E4"></div>
<div style="position:absolute;left:374px;top:727px;width:1px;height:14px;background:#E4E4E4"></div>
<div style="position:absolute;left:388px;top:727px;width:1px;height:14px;background:#E4E4E4"></div>
<div style="position:absolute;left:402px;top:727px;width:1px;height:14px;background:#E4E4E4"></div>
<div style="position:absolute;left:416px;top:727px;width:1px;height:14px;background:#E4E4E4"></div>
<div style="position:absolute;left:430px;top:727px;width:1px;height:14px;background:#E4E4E4"></div>
<div style="position:absolute;left:444px;top:727px;width:1px;height:14px;background:#E4E4E4"></div>
<div style="position:absolute;left:458px;top:727px;width:1px;height:14px;background:#E4E4E4"></div>
<div style="position:absolute;left:478px;top:727px;width:1px;height:14px;background:#E4E4E4"></div>
<div style="position:absolute;left:500px;top:727px;width:1px;height:14px;background:#E4E4E4"></div>
<div style="position:absolute;left:521px;top:727px;width:1px;height:14px;background:#E4E4E4"></div>
<div style="position:absolute;left:542px;top:727px;width:1px;height:14px;background:#E4E4E4"></div>
<div style="position:absolute;left:562px;top:727px;width:1px;height:14px;background:#E4E4E4"></div>
<div style="position:absolute;left:584px;top:727px;width:1px;height:14px;background:#E4E4E4"></div>
<div style="position:absolute;left:604px;top:727px;width:1px;height:14px;background:#E4E4E4"></div>
<div style="position:absolute;left:626px;top:727px;width:1px;height:14px;background:#E4E4E4"></div>
<div style="position:absolute;left:646px;top:727px;width:1px;height:14px;background:#E4E4E4"></div>
<div style="position:absolute;left:668px;top:727px;width:1px;height:14px;background:#E4E4E4"></div>
<div style="position:absolute;left:688px;top:727px;width:1px;height:14px;background:#E4E4E4"></div>
<div style="position:absolute;left:710px;top:727px;width:1px;height:14px;background:#E4E4E4"></div>
<div style="position:absolute;left:730px;top:727px;width:1px;height:14px;background:#E4E4E4"></div>
<div style="position:absolute;left:752px;top:727px;width:1px;height:14px;background:#E4E4E4"></div>
<div style="position:absolute;left:772px;top:727px;width:1px;height:14px;background:#E4E4E4"></div>
<div style="position:absolute;left:794px;top:727px;width:1px;height:14px;background:#E4E4E4"></div>
<div style="position:absolute;left:814px;top:727px;width:1px;height:14px;background:#E4E4E4"></div>
<div style="position:absolute;left:836px;top:727px;width:1px;height:14px;background:#E4E4E4"></div>
<div style="position:absolute;left:856px;top:727px;width:1px;height:14px;background:#E4E4E4"></div>
<div style="position:absolute;left:256px;top:146px;width:741px;height:1px;background:#E4E4E4"></div>
<div style="position:absolute;left:256px;top:160px;width:741px;height:1px;background:#E4E4E4"></div>
<div style="position:absolute;left:256px;top:174px;width:741px;height:1px;background:#E4E4E4"></div>
<div style="position:absolute;left:256px;top:202px;width:741px;height:1px;background:#E4E4E4"></div>
<div style="position:absolute;left:256px;top:215px;width:741px;height:1px;background:#E4E4E4"></div>
<div style="position:absolute;left:256px;top:232px;width:741px;height:1px;background:#E4E4E4"></div>
<div style="position:absolute;left:256px;top:242px;width:741px;height:1px;background:#E4E4E4"></div>
<div style="position:absolute;left:256px;top:255px;width:741px;height:1px;background:#E4E4E4"></div>
<div style="position:absolute;left:256px;top:272px;width:741px;height:1px;background:#E4E4E4"></div>
<div style="position:absolute;left:256px;top:282px;width:741px;height:1px;background:#E4E4E4"></div>
<div style="position:absolute;left:256px;top:295px;width:741px;height:1px;background:#E4E4E4"></div>
<div style="position:absolute;left:256px;top:312px;width:6px;height:1px;background:#E4E4E4"></div>
<div style="position:absolute;left:256px;top:345px;width:741px;height:1px;background:#E4E4E4"></div>
<div style="position:absolute;left:256px;top:358px;width:741px;height:1px;background:#E4E4E4"></div>
<div style="position:absolute;left:256px;top:372px;width:6px;height:1px;background:#E4E4E4"></div>
<div style="position:absolute;left:256px;top:386px;width:741px;height:1px;background:#E4E4E4"></div>
<div style="position:absolute;left:256px;top:399px;width:741px;height:1px;background:#E4E4E4"></div>
<div style="position:absolute;left:256px;top:409px;width:741px;height:1px;background:#E4E4E4"></div>
<div style="position:absolute;left:256px;top:426px;width:741px;height:1px;background:#E4E4E4"></div>
<div style="position:absolute;left:256px;top:439px;width:741px;height:1px;background:#E4E4E4"></div>
<div style="position:absolute;left:256px;top:456px;width:741px;height:1px;background:#E4E4E4"></div>
<div style="position:absolute;left:256px;top:470px;width:741px;height:1px;background:#E4E4E4"></div>
<div style="position:absolute;left:256px;top:479px;width:741px;height:1px;background:#E4E4E4"></div>
<div style="position:absolute;left:256px;top:493px;width:741px;height:1px;background:#E4E4E4"></div>
<div style="position:absolute;left:256px;top:510px;width:741px;height:1px;background:#E4E4E4"></div>
<div style="position:absolute;left:256px;top:523px;width:741px;height:1px;background:#E4E4E4"></div>
<div style="position:absolute;left:256px;top:533px;width:741px;height:1px;background:#E4E4E4"></div>
<div style="position:absolute;left:256px;top:547px;width:741px;height:1px;background:#E4E4E4"></div>
<div style="position:absolute;left:256px;top:563px;width:741px;height:1px;background:#E4E4E4"></div>
<div style="position:absolute;left:256px;top:577px;width:741px;height:1px;background:#E4E4E4"></div>
<div style="position:absolute;left:256px;top:591px;width:741px;height:1px;background:#E4E4E4"></div>
<div style="position:absolute;left:256px;top:604px;width:741px;height:1px;background:#E4E4E4"></div>
<div style="position:absolute;left:256px;top:618px;width:741px;height:1px;background:#E4E4E4"></div>
<div style="position:absolute;left:256px;top:631px;width:741px;height:1px;background:#E4E4E4"></div>
<div style="position:absolute;left:256px;top:645px;width:741px;height:1px;background:#E4E4E4"></div>
<div style="position:absolute;left:256px;top:659px;width:741px;height:1px;background:#E4E4E4"></div>
<div style="position:absolute;left:256px;top:672px;width:741px;height:1px;background:#E4E4E4"></div>
<div style="position:absolute;left:256px;top:686px;width:741px;height:1px;background:#E4E4E4"></div>
<div style="position:absolute;left:256px;top:699px;width:741px;height:1px;background:#E4E4E4"></div>
<div style="position:absolute;left:256px;top:713px;width:741px;height:1px;background:#E4E4E4"></div>
<div style="position:absolute;left:256px;top:727px;width:741px;height:1px;background:#E4E4E4"></div>
<div style="position:absolute;left:256px;top:741px;width:741px;height:1px;background:#E4E4E4"></div>
<div style="position:absolute;left:262px;top:295px;width:1px;height:161px;background:#E4E4E4"></div>
<div style="position:absolute;left:932px;top:295px;width:1px;height:161px;background:#E4E4E4"></div>
<div style="position:absolute;left:543px;top:345px;width:1px;height:111px;background:#E4E4E4"></div>
<div style="position:absolute;left:572px;top:345px;width:1px;height:111px;background:#E4E4E4"></div>
<div style="position:absolute;left:622px;top:345px;width:1px;height:111px;background:#E4E4E4"></div>
<div style="position:absolute;left:650px;top:345px;width:1px;height:111px;background:#E4E4E4"></div>
<div style="position:absolute;left:222px;top:160px;width:775px;height:1px;background:#FF4A4A"></div>
<div style="position:absolute;left:222px;top:215px;width:775px;height:1px;background:#FF4A4A"></div>
<div style="position:absolute;left:222px;top:242px;width:775px;height:1px;background:#FF4A4A"></div>
<div style="position:absolute;left:222px;top:255px;width:775px;height:1px;background:#FF4A4A"></div>
<div style="position:absolute;left:222px;top:282px;width:775px;height:1px;background:#FF4A4A"></div>
<div style="position:absolute;left:222px;top:295px;width:775px;height:1px;background:#FF4A4A"></div>
<div style="position:absolute;left:222px;top:345px;width:775px;height:1px;background:#FF4A4A"></div>
<div style="position:absolute;left:222px;top:358px;width:775px;height:1px;background:#FF4A4A"></div>
<div style="position:absolute;left:222px;top:386px;width:775px;height:1px;background:#FF4A4A"></div>
<div style="position:absolute;left:222px;top:399px;width:775px;height:1px;background:#FF4A4A"></div>
<div style="position:absolute;left:222px;top:426px;width:775px;height:1px;background:#FF4A4A"></div>
<div style="position:absolute;left:222px;top:439px;width:775px;height:1px;background:#FF4A4A"></div>
<div style="position:absolute;left:222px;top:456px;width:775px;height:1px;background:#FF4A4A"></div>
<div style="position:absolute;left:222px;top:470px;width:775px;height:1px;background:#FF4A4A"></div>
<div style="position:absolute;left:222px;top:510px;width:775px;height:1px;background:#FF4A4A"></div>
<div style="position:absolute;left:222px;top:523px;width:775px;height:1px;background:#FF4A4A"></div>
<div style="position:absolute;left:222px;top:563px;width:775px;height:1px;background:#FF4A4A"></div>
<div style="position:absolute;left:294px;top:295px;width:1px;height:161px;background:#FF4A4A"></div>
<div style="position:absolute;left:364px;top:295px;width:1px;height:161px;background:#FF4A4A"></div>
<div style="position:absolute;left:508px;top:295px;width:1px;height:161px;background:#FF4A4A"></div>
<div style="position:absolute;left:746px;top:295px;width:1px;height:161px;background:#FF4A4A"></div>
<div style="position:absolute;left:783px;top:295px;width:1px;height:161px;background:#FF4A4A"></div>
<div style="position:absolute;left:818px;top:295px;width:1px;height:161px;background:#FF4A4A"></div>
<div style="position:absolute;top:176.02px;left:267.00px;line-height:26px;height:26px;font-size:18.4px;font-weight:bold;color:#2E2E2E;white-space:pre;;">&lt;ТекстЗаголовка&gt;</div>
<div style="position:absolute;left:262px;top:201px;width:735px;height:2px;background:#484848"></div>
<div style="position:absolute;top:216.74px;left:264.80px;line-height:17px;height:17px;font-size:12px;font-weight:normal;color:#5E5E5E;white-space:pre;transform:scaleY(1.1);transform-origin:0 12.66px;;">Поставщик:</div>
<div style="position:absolute;top:215.73px;left:349.60px;line-height:19px;height:19px;font-size:12.9px;font-weight:bold;color:#2E2E2E;white-space:pre;transform:scaleY(1.1);transform-origin:0 13.97px;;">&lt;ПредставлениеПоставщика&gt;</div>
<div style="position:absolute;top:256.64px;left:264.80px;line-height:17px;height:17px;font-size:12px;font-weight:normal;color:#5E5E5E;white-space:pre;transform:scaleY(1.1);transform-origin:0 12.66px;;">Покупатель:</div>
<div style="position:absolute;top:255.23px;left:349.60px;line-height:19px;height:19px;font-size:12.9px;font-weight:bold;color:#2E2E2E;white-space:pre;transform:scaleY(1.1);transform-origin:0 13.97px;;">&lt;ПредставлениеПолучателя&gt;</div>
<div style="position:absolute;left:262px;top:296px;width:735px;height:1px;background:#333333"></div>
<div style="position:absolute;left:262px;top:295px;width:1px;height:50px;background:#262626"></div>
<div style="position:absolute;left:263px;top:295px;width:1px;height:50px;background:#B0B0B0"></div>
<div style="position:absolute;left:571px;top:295px;width:1px;height:50px;background:#444"></div>
<div style="position:absolute;left:649px;top:295px;width:2px;height:50px;background:#9A9A9A"></div>
<div style="position:absolute;left:931px;top:295px;width:1px;height:91px;background:#444"></div>
<div style="position:absolute;left:931px;top:312px;width:66px;height:1px;background:#444"></div>
<div style="position:absolute;top:311.56px;left:-222.50px;width:1000px;text-align:center;line-height:18px;height:18px;font-size:12.8px;font-weight:bold;color:#2E2E2E;white-space:pre;transform:scaleY(1.1);transform-origin:0 13.44px;;">№</div>
<div style="position:absolute;left:295px;top:311.56px;width:69px;height:18px;overflow:hidden"><div style="position:absolute;top:0;left:0.60px;line-height:18px;height:18px;font-size:12.8px;font-weight:bold;color:#2E2E2E;white-space:pre;transform:scaleY(1.1);transform-origin:0 13.44px;;">КолонкиКодов</div></div>
<div style="position:absolute;top:311.56px;left:-63.50px;width:1000px;text-align:center;line-height:18px;height:18px;font-size:12.8px;font-weight:bold;color:#2E2E2E;white-space:pre;transform:scaleY(1.1);transform-origin:0 13.44px;;">Товар</div>
<div style="position:absolute;top:311.56px;left:40.00px;width:1000px;text-align:center;line-height:18px;height:18px;font-size:12.8px;font-weight:bold;color:#2E2E2E;white-space:pre;transform:scaleY(1.1);transform-origin:0 13.44px;;">Мест</div>
<div style="position:absolute;left:572px;top:311.56px;width:77px;height:18px;overflow:hidden"><div style="position:absolute;top:0;left:-461.00px;width:1000px;text-align:center;line-height:18px;height:18px;font-size:12.8px;font-weight:bold;color:#2E2E2E;white-space:pre;transform:scaleY(1.1);transform-origin:0 13.44px;;">Количество</div></div>
<div style="position:absolute;top:311.56px;left:198.00px;width:1000px;text-align:center;line-height:18px;height:18px;font-size:12.8px;font-weight:bold;color:#2E2E2E;white-space:pre;transform:scaleY(1.1);transform-origin:0 13.44px;;">Цена</div>
<div style="position:absolute;left:747px;top:303.56px;width:38px;height:18px;overflow:hidden"><div style="position:absolute;top:0;left:-481.50px;width:1000px;text-align:center;line-height:18px;height:18px;font-size:12.8px;font-weight:bold;color:#2E2E2E;white-space:pre;transform:scaleY(1.1);transform-origin:0 13.44px;;">Сумма</div></div>
<div style="position:absolute;left:747px;top:319.06px;width:36px;height:18px;overflow:hidden"><div style="position:absolute;top:0;left:-481.50px;width:1000px;text-align:center;line-height:18px;height:18px;font-size:12.8px;font-weight:bold;color:#2E2E2E;white-space:pre;transform:scaleY(1.1);transform-origin:0 13.44px;;">без скидки</div></div>
<div style="position:absolute;left:784px;top:311.56px;width:34px;height:18px;overflow:hidden"><div style="position:absolute;top:0;left:-481.50px;width:1000px;text-align:center;line-height:18px;height:18px;font-size:12.8px;font-weight:bold;color:#2E2E2E;white-space:pre;transform:scaleY(1.1);transform-origin:0 13.44px;;">Скидка</div></div>
<div style="position:absolute;top:311.56px;left:374.50px;width:1000px;text-align:center;line-height:18px;height:18px;font-size:12.8px;font-weight:bold;color:#2E2E2E;white-space:pre;transform:scaleY(1.1);transform-origin:0 13.44px;;">Сумма</div>
<div style="position:absolute;left:932px;top:295.16px;width:65px;height:18px;overflow:hidden"><div style="position:absolute;top:0;left:-439.50px;width:1000px;text-align:center;line-height:18px;height:18px;font-size:12.8px;font-weight:bold;color:#2E2E2E;white-space:pre;transform:scaleY(1.1);transform-origin:0 13.44px;;">НомерГТД</div></div>
<div style="position:absolute;left:932px;top:311.56px;width:65px;height:18px;overflow:hidden"><div style="position:absolute;top:0;left:-439.00px;width:1000px;text-align:center;line-height:18px;height:18px;font-size:12.8px;font-weight:bold;color:#2E2E2E;white-space:pre;transform:scaleY(1.1);transform-origin:0 13.44px;;">Страна</div></div>
<div style="position:absolute;left:932px;top:327.96px;width:65px;height:18px;overflow:hidden"><div style="position:absolute;top:0;left:-439.00px;width:1000px;text-align:center;line-height:18px;height:18px;font-size:12.8px;font-weight:bold;color:#2E2E2E;white-space:pre;transform:scaleY(1.1);transform-origin:0 13.44px;;">происхождения</div></div>
<div style="position:absolute;left:262px;top:358px;width:1px;height:28px;background:#262626"></div>
<div style="position:absolute;left:263px;top:358px;width:1px;height:28px;background:#B0B0B0"></div>
<div style="position:absolute;left:543px;top:358px;width:1px;height:28px;background:#444"></div>
<div style="position:absolute;left:571px;top:358px;width:1px;height:28px;background:#444"></div>
<div style="position:absolute;left:621px;top:358px;width:2px;height:28px;background:#9A9A9A"></div>
<div style="position:absolute;left:649px;top:358px;width:2px;height:28px;background:#9A9A9A"></div>
<div style="position:absolute;left:931px;top:372px;width:66px;height:1px;background:#444"></div>
<div style="position:absolute;left:263.5px;top:358.17px;width:30.5px;height:15px;overflow:hidden"><div style="position:absolute;top:0;left:-484.30px;width:1000px;text-align:center;line-height:15px;height:15px;font-size:10.2px;font-weight:normal;color:#444;white-space:pre;transform:scaleY(1.1);transform-origin:0 11.03px;;">&lt;НомерСтроки&gt;</div></div>
<div style="position:absolute;top:358.17px;left:297.50px;line-height:15px;height:15px;font-size:10.2px;font-weight:normal;color:#444;white-space:pre;transform:scaleY(1.1);transform-origin:0 11.03px;;">&lt;Артикул&gt;</div>
<div style="position:absolute;left:365px;top:358.17px;width:143px;height:15px;overflow:hidden"><div style="position:absolute;top:0;left:3.00px;line-height:15px;height:15px;font-size:10.2px;font-weight:normal;color:#444;white-space:pre;transform:scaleY(1.1);transform-origin:0 11.03px;;">&lt;[любой текст]Товар&gt;</div></div>
<div style="position:absolute;left:509px;top:358.17px;width:34px;height:15px;overflow:hidden"><div style="position:absolute;top:0;left:-486.50px;width:1000px;text-align:center;line-height:15px;height:15px;font-size:10.2px;font-weight:normal;color:#444;white-space:pre;transform:scaleY(1.1);transform-origin:0 11.03px;;">&lt;Мест&gt;</div></div>
<div style="position:absolute;left:544px;top:358.17px;width:27px;height:15px;overflow:hidden"><div style="position:absolute;top:0;left:2.70px;line-height:15px;height:15px;font-size:10.2px;font-weight:normal;color:#444;white-space:pre;transform:scaleY(1.1);transform-origin:0 11.03px;;">&lt;ЕдиницаМест&gt;</div></div>
<div style="position:absolute;left:572px;top:358.17px;width:49px;height:15px;overflow:hidden"><div style="position:absolute;top:0;right:2.50px;line-height:15px;height:15px;font-size:10.2px;font-weight:normal;color:#444;white-space:pre;transform:scaleY(1.1);transform-origin:0 11.03px;;">&lt;Количество&gt;</div></div>
<div style="position:absolute;left:623px;top:358.17px;width:26px;height:15px;overflow:hidden"><div style="position:absolute;top:0;left:2.00px;line-height:15px;height:15px;font-size:10.2px;font-weight:normal;color:#444;white-space:pre;transform:scaleY(1.1);transform-origin:0 11.03px;;">&lt;ЕдиницаИзмерения&gt;</div></div>
<div style="position:absolute;top:358.17px;right:280.70px;line-height:15px;height:15px;font-size:10.2px;font-weight:normal;color:#444;white-space:pre;transform:scaleY(1.1);transform-origin:0 11.03px;;">&lt;Цена&gt;</div>
<div style="position:absolute;left:747px;top:358.17px;width:36px;height:15px;overflow:hidden"><div style="position:absolute;top:0;left:0.80px;line-height:15px;height:15px;font-size:10.2px;font-weight:normal;color:#444;white-space:pre;transform:scaleY(1.1);transform-origin:0 11.03px;;">кидки&gt;</div></div>
<div style="position:absolute;left:784px;top:358.17px;width:34px;height:15px;overflow:hidden"><div style="position:absolute;top:0;left:0.60px;line-height:15px;height:15px;font-size:10.2px;font-weight:normal;color:#444;white-space:pre;transform:scaleY(1.1);transform-origin:0 11.03px;;">кидка&gt;</div></div>
<div style="position:absolute;top:358.17px;right:95.60px;line-height:15px;height:15px;font-size:10.2px;font-weight:normal;color:#444;white-space:pre;transform:scaleY(1.1);transform-origin:0 11.03px;;">&lt;Сумма&gt;</div>
<div style="position:absolute;left:932px;top:358.17px;width:65px;height:15px;overflow:hidden"><div style="position:absolute;top:0;left:3.00px;line-height:15px;height:15px;font-size:10.2px;font-weight:normal;color:#444;white-space:pre;transform:scaleY(1.1);transform-origin:0 11.03px;;">&lt;НомерГТД&gt;</div></div>
<div style="position:absolute;left:932px;top:371.27px;width:65px;height:15px;overflow:hidden"><div style="position:absolute;top:0;left:3.00px;line-height:15px;height:15px;font-size:10.2px;font-weight:normal;color:#444;white-space:pre;transform:scaleY(1.1);transform-origin:0 11.03px;;">&lt;СтранаПроисхождения&gt;</div></div>
<div style="position:absolute;left:262px;top:399px;width:735px;height:1px;background:#333333"></div>
<div style="position:absolute;top:408.86px;right:282.00px;line-height:18px;height:18px;font-size:12.8px;font-weight:bold;color:#2E2E2E;white-space:pre;transform:scaleY(1.1);transform-origin:0 13.44px;;">Итого:</div>
<div style="position:absolute;left:747px;top:408.86px;width:36px;height:18px;overflow:hidden"><div style="position:absolute;top:0;right:4.00px;line-height:18px;height:18px;font-size:12.8px;font-weight:bold;color:#2E2E2E;white-space:pre;transform:scaleY(1.1);transform-origin:0 13.44px;;">&lt;СуммаБезСкидок&gt;</div></div>
<div style="position:absolute;left:784px;top:408.86px;width:34px;height:18px;overflow:hidden"><div style="position:absolute;top:0;right:4.60px;line-height:18px;height:18px;font-size:12.8px;font-weight:bold;color:#2E2E2E;white-space:pre;transform:scaleY(1.1);transform-origin:0 13.44px;;">&lt;СуммаСкидок&gt;</div></div>
<div style="position:absolute;top:408.86px;right:96.40px;line-height:18px;height:18px;font-size:12.8px;font-weight:bold;color:#2E2E2E;white-space:pre;transform:scaleY(1.1);transform-origin:0 13.44px;;">&lt;Всего&gt;</div>
<div style="position:absolute;top:439.76px;right:281.30px;line-height:18px;height:18px;font-size:12.8px;font-weight:bold;color:#2E2E2E;white-space:pre;transform:scaleY(1.1);transform-origin:0 13.44px;;">&lt;НДС&gt;</div>
<div style="position:absolute;top:439.76px;right:96.40px;line-height:18px;height:18px;font-size:12.8px;font-weight:bold;color:#2E2E2E;white-space:pre;transform:scaleY(1.1);transform-origin:0 13.44px;;">&lt;ВсегоНДС&gt;</div>
<div style="position:absolute;top:478.02px;left:266.00px;line-height:16px;height:16px;font-size:11.2px;font-weight:normal;color:#555;white-space:pre;transform:scaleY(1.1);transform-origin:0 11.88px;;">&lt;ИтоговаяСтрока&gt;</div>
<div style="position:absolute;top:494.60px;left:266.00px;line-height:18px;height:18px;font-size:12.7px;font-weight:bold;color:#2E2E2E;white-space:pre;transform:scaleY(1.1);transform-origin:0 13.40px;;">&lt;СуммаПрописью&gt;</div>
<div style="position:absolute;left:262px;top:533px;width:735px;height:2px;background:#3A3A3A"></div>
<div style="position:absolute;top:547.60px;left:268.00px;line-height:18px;height:18px;font-size:12.7px;font-weight:bold;color:#2E2E2E;white-space:pre;transform:scaleY(1.1);transform-origin:0 13.40px;;">Отпустил</div>
<svg style="position:absolute;left:340px;top:534px" width="118" height="32" viewBox="0 0 118 32"><rect x="3.2" y="3" width="109.5" height="25.6" fill="none" stroke="#2A2A2A" stroke-width="1.7" stroke-dasharray="3.2 2.2"/></svg>
<div style="position:absolute;left:480px;top:550.03px;width:220px;height:14px;overflow:hidden"><div style="position:absolute;top:0;right:78.00px;line-height:14px;height:14px;font-size:10px;font-weight:normal;color:#444;white-space:pre;transform:scaleY(1.1);transform-origin:0 10.46px;;">&lt;ОтветственныйПредставление&gt;</div></div>
<div style="position:absolute;top:546.53px;left:797.00px;line-height:19px;height:19px;font-size:12.9px;font-weight:bold;color:#2E2E2E;white-space:pre;transform:scaleY(1.1);transform-origin:0 13.97px;;">Получил</div>
<div style="position:absolute;left:360px;top:355px;width:155px;height:36px;box-sizing:border-box;border:4.5px solid #000"></div>
<div style="position:absolute;left:510px;top:359px;width:1px;height:27px;background:#C8B450"></div>
</div>
<div style="position:absolute;left:256px;top:100px;width:741px;height:1px;background:#BDBDBD"></div>
<div style="position:absolute;left:255px;top:97px;width:1px;height:49px;background:#A8A8A8"></div>
<div style="position:absolute;left:0;top:0;width:997px;height:146px;overflow:hidden">
<div style="position:absolute;left:256px;top:100px;width:38px;height:34px;box-sizing:border-box;border-left:1px solid #D0D0D0;border-top:1px solid #C4C4C4;border-right:1px solid #C4C4C4;background:#fff"></div>
<div style="position:absolute;left:294px;top:100px;width:71px;height:34px;box-sizing:border-box;border-left:1px solid #D0D0D0;border-top:1px solid #C4C4C4;border-right:1px solid #C4C4C4;background:#fff"></div>
<div style="position:absolute;left:365px;top:100px;width:382px;height:34px;box-sizing:border-box;border-left:1px solid #D0D0D0;border-top:1px solid #C4C4C4;border-right:1px solid #C4C4C4;background:#fff"></div>
<div style="position:absolute;left:365px;top:118px;width:144px;height:16px;box-sizing:border-box;border-left:1px solid #D0D0D0;border-top:1px solid #C4C4C4;border-right:1px solid #C4C4C4;background:#fff"></div>
<div style="position:absolute;left:747px;top:100px;width:72px;height:34px;box-sizing:border-box;border-left:1px solid #D0D0D0;border-top:1px solid #C4C4C4;border-right:1px solid #C4C4C4;background:#fff"></div>
<div style="position:absolute;left:747px;top:117px;width:37px;height:17px;box-sizing:border-box;border-left:1px solid #D0D0D0;border-top:1px solid #C4C4C4;border-right:1px solid #C4C4C4;background:#fff"></div>
<div style="position:absolute;left:784px;top:117px;width:35px;height:17px;box-sizing:border-box;border-left:1px solid #D0D0D0;border-top:1px solid #C4C4C4;border-right:1px solid #C4C4C4;background:#fff"></div>
<div style="position:absolute;left:819px;top:100px;width:191px;height:34px;box-sizing:border-box;border-left:1px solid #D0D0D0;border-top:1px solid #C4C4C4;border-right:1px solid #C4C4C4;background:#fff"></div>
</div>
<div style="position:absolute;left:258px;top:99.77px;width:35px;height:15px;overflow:hidden"><div style="position:absolute;top:0;left:1.30px;line-height:15px;height:15px;font-size:10.2px;font-weight:normal;color:#444;white-space:pre;transform:scaleY(1.1);transform-origin:0 11.03px;;">НомерСтроки</div></div>
<div style="position:absolute;left:296px;top:99.77px;width:68px;height:15px;overflow:hidden"><div style="position:absolute;top:0;left:1.30px;line-height:15px;height:15px;font-size:10.2px;font-weight:normal;color:#444;white-space:pre;transform:scaleY(1.1);transform-origin:0 11.03px;;">КолонкаКодов</div></div>
<div style="position:absolute;top:99.77px;left:367.80px;line-height:15px;height:15px;font-size:10.2px;font-weight:normal;color:#444;white-space:pre;transform:scaleY(1.1);transform-origin:0 11.03px;;">Данные</div>
<div style="position:absolute;top:116.77px;left:367.80px;line-height:15px;height:15px;font-size:10.2px;font-weight:normal;color:#444;white-space:pre;transform:scaleY(1.1);transform-origin:0 11.03px;;">Товар</div>
<div style="position:absolute;top:99.77px;left:749.30px;line-height:15px;height:15px;font-size:10.2px;font-weight:normal;color:#444;white-space:pre;transform:scaleY(1.1);transform-origin:0 11.03px;;">Скидка</div>
<div style="position:absolute;left:748px;top:116.77px;width:35px;height:15px;overflow:hidden"><div style="position:absolute;top:0;left:1.30px;line-height:15px;height:15px;font-size:10.2px;font-weight:normal;color:#444;white-space:pre;transform:scaleY(1.1);transform-origin:0 11.03px;;">Сумма</div></div>
<div style="position:absolute;left:785px;top:116.77px;width:33px;height:15px;overflow:hidden"><div style="position:absolute;top:0;left:1.30px;line-height:15px;height:15px;font-size:10.2px;font-weight:normal;color:#444;white-space:pre;transform:scaleY(1.1);transform-origin:0 11.03px;;">Сумма</div></div>
<div style="position:absolute;top:99.77px;left:821.80px;line-height:15px;height:15px;font-size:10.2px;font-weight:normal;color:#444;white-space:pre;transform:scaleY(1.1);transform-origin:0 11.03px;;">Сумма</div>
<div style="position:absolute;left:0;top:0;width:997px;height:738px;overflow:hidden">
<div style="position:absolute;left:222px;top:133px;width:775px;height:1px;background:#C6C6C6"></div>
<div style="position:absolute;left:222px;top:146px;width:775px;height:1px;background:#C6C6C6"></div>
<div style="position:absolute;left:256px;top:134px;width:6px;height:12px;box-sizing:border-box;border-right:1px solid #C8C8C8;background:linear-gradient(#FFFFFF,#F4F4F4)"></div>
<div style="position:absolute;top:133.97px;left:-241.00px;width:1000px;text-align:center;line-height:15px;height:15px;font-size:10.2px;font-weight:normal;color:#333;white-space:pre;transform:scaleY(1.1);transform-origin:0 11.03px;;">1</div>
<div style="position:absolute;left:262px;top:134px;width:32px;height:12px;box-sizing:border-box;border-right:1px solid #C8C8C8;background:linear-gradient(#FFFFFF,#F4F4F4)"></div>
<div style="position:absolute;top:133.97px;left:-222.00px;width:1000px;text-align:center;line-height:15px;height:15px;font-size:10.2px;font-weight:normal;color:#333;white-space:pre;transform:scaleY(1.1);transform-origin:0 11.03px;;">2</div>
<div style="position:absolute;left:294px;top:134px;width:70px;height:12px;box-sizing:border-box;border-right:1px solid #C8C8C8;background:linear-gradient(#FFFFFF,#F4F4F4)"></div>
<div style="position:absolute;top:133.97px;left:-170.75px;width:1000px;text-align:center;line-height:15px;height:15px;font-size:10.2px;font-weight:normal;color:#333;white-space:pre;transform:scaleY(1.1);transform-origin:0 11.03px;;">3</div>
<div style="position:absolute;left:364px;top:134px;width:144px;height:12px;box-sizing:border-box;border-right:1px solid #C8C8C8;background:linear-gradient(#F4F4F4,#E6E6E6)"></div>
<div style="position:absolute;top:133.97px;left:-63.50px;width:1000px;text-align:center;line-height:15px;height:15px;font-size:10.2px;font-weight:bold;color:#222;white-space:pre;transform:scaleY(1.1);transform-origin:0 11.03px;;">4</div>
<div style="position:absolute;left:508px;top:134px;width:35px;height:12px;box-sizing:border-box;border-right:1px solid #C8C8C8;background:linear-gradient(#FFFFFF,#F4F4F4)"></div>
<div style="position:absolute;top:133.97px;left:25.75px;width:1000px;text-align:center;line-height:15px;height:15px;font-size:10.2px;font-weight:normal;color:#333;white-space:pre;transform:scaleY(1.1);transform-origin:0 11.03px;;">5</div>
<div style="position:absolute;left:543px;top:134px;width:29px;height:12px;box-sizing:border-box;border-right:1px solid #C8C8C8;background:linear-gradient(#FFFFFF,#F4F4F4)"></div>
<div style="position:absolute;top:133.97px;left:57.25px;width:1000px;text-align:center;line-height:15px;height:15px;font-size:10.2px;font-weight:normal;color:#333;white-space:pre;transform:scaleY(1.1);transform-origin:0 11.03px;;">6</div>
<div style="position:absolute;left:572px;top:134px;width:50px;height:12px;box-sizing:border-box;border-right:1px solid #C8C8C8;background:linear-gradient(#FFFFFF,#F4F4F4)"></div>
<div style="position:absolute;top:133.97px;left:96.75px;width:1000px;text-align:center;line-height:15px;height:15px;font-size:10.2px;font-weight:normal;color:#333;white-space:pre;transform:scaleY(1.1);transform-origin:0 11.03px;;">7</div>
<div style="position:absolute;left:622px;top:134px;width:28px;height:12px;box-sizing:border-box;border-right:1px solid #C8C8C8;background:linear-gradient(#FFFFFF,#F4F4F4)"></div>
<div style="position:absolute;top:133.97px;left:136.00px;width:1000px;text-align:center;line-height:15px;height:15px;font-size:10.2px;font-weight:normal;color:#333;white-space:pre;transform:scaleY(1.1);transform-origin:0 11.03px;;">8</div>
<div style="position:absolute;left:650px;top:134px;width:96px;height:12px;box-sizing:border-box;border-right:1px solid #C8C8C8;background:linear-gradient(#FFFFFF,#F4F4F4)"></div>
<div style="position:absolute;top:133.97px;left:198.25px;width:1000px;text-align:center;line-height:15px;height:15px;font-size:10.2px;font-weight:normal;color:#333;white-space:pre;transform:scaleY(1.1);transform-origin:0 11.03px;;">9</div>
<div style="position:absolute;left:746px;top:134px;width:38px;height:12px;box-sizing:border-box;border-right:1px solid #C8C8C8;background:linear-gradient(#FFFFFF,#F4F4F4)"></div>
<div style="position:absolute;top:133.97px;left:265.00px;width:1000px;text-align:center;line-height:15px;height:15px;font-size:10.2px;font-weight:normal;color:#333;white-space:pre;transform:scaleY(1.1);transform-origin:0 11.03px;;">10</div>
<div style="position:absolute;left:784px;top:134px;width:34px;height:12px;box-sizing:border-box;border-right:1px solid #C8C8C8;background:linear-gradient(#FFFFFF,#F4F4F4)"></div>
<div style="position:absolute;top:133.97px;left:300.75px;width:1000px;text-align:center;line-height:15px;height:15px;font-size:10.2px;font-weight:normal;color:#333;white-space:pre;transform:scaleY(1.1);transform-origin:0 11.03px;;">11</div>
<div style="position:absolute;left:818px;top:134px;width:114px;height:12px;box-sizing:border-box;border-right:1px solid #C8C8C8;background:linear-gradient(#FFFFFF,#F4F4F4)"></div>
<div style="position:absolute;top:133.97px;left:374.75px;width:1000px;text-align:center;line-height:15px;height:15px;font-size:10.2px;font-weight:normal;color:#333;white-space:pre;transform:scaleY(1.1);transform-origin:0 11.03px;;">12</div>
<div style="position:absolute;left:932px;top:134px;width:128px;height:12px;box-sizing:border-box;border-right:1px solid #C8C8C8;background:linear-gradient(#FFFFFF,#F4F4F4)"></div>
<div style="position:absolute;top:133.97px;left:495.50px;width:1000px;text-align:center;line-height:15px;height:15px;font-size:10.2px;font-weight:normal;color:#333;white-space:pre;transform:scaleY(1.1);transform-origin:0 11.03px;;">13</div>
<div style="position:absolute;left:293px;top:134px;width:1px;height:12px;background:#FF4A4A"></div>
<div style="position:absolute;left:364px;top:134px;width:1px;height:12px;background:#FF4A4A"></div>
<div style="position:absolute;left:746px;top:134px;width:1px;height:12px;background:#FF4A4A"></div>
<div style="position:absolute;left:784px;top:134px;width:1px;height:12px;background:#FF4A4A"></div>
<div style="position:absolute;left:818px;top:134px;width:1px;height:12px;background:#FF4A4A"></div>
<div style="position:absolute;left:508px;top:134px;width:1px;height:12px;background:#FF4A4A"></div>
</div>
<div style="position:absolute;left:0;top:0;width:1024px;height:717px;overflow:hidden;clip-path:inset(146px 0 0 0)">
<div style="position:absolute;left:222px;top:146px;width:1px;height:571px;background:#C4C4C4"></div>
<div style="position:absolute;left:255px;top:146px;width:1px;height:571px;background:#A8A8A8"></div>
<div style="position:absolute;left:223px;top:147px;width:32px;height:14px;box-sizing:border-box;border-bottom:1px solid #C8C8C8;background:#FFFFFF"></div>
<div style="position:absolute;top:146.07px;left:-261.50px;width:1000px;text-align:center;line-height:15px;height:15px;font-size:10.2px;font-weight:normal;color:#333;white-space:pre;transform:scaleY(1.1);transform-origin:0 11.03px;;">1</div>
<div style="position:absolute;left:223px;top:161px;width:32px;height:14px;box-sizing:border-box;border-bottom:1px solid #C8C8C8;background:#FFFFFF"></div>
<div style="position:absolute;top:160.07px;left:-261.50px;width:1000px;text-align:center;line-height:15px;height:15px;font-size:10.2px;font-weight:normal;color:#333;white-space:pre;transform:scaleY(1.1);transform-origin:0 11.03px;;">2</div>
<div style="position:absolute;left:223px;top:175px;width:32px;height:28px;box-sizing:border-box;border-bottom:1px solid #C8C8C8;background:#FFFFFF"></div>
<div style="position:absolute;top:181.07px;left:-261.50px;width:1000px;text-align:center;line-height:15px;height:15px;font-size:10.2px;font-weight:normal;color:#333;white-space:pre;transform:scaleY(1.1);transform-origin:0 11.03px;;">3</div>
<div style="position:absolute;left:223px;top:203px;width:32px;height:13px;box-sizing:border-box;border-bottom:1px solid #C8C8C8;background:#FFFFFF"></div>
<div style="position:absolute;top:201.57px;left:-261.50px;width:1000px;text-align:center;line-height:15px;height:15px;font-size:10.2px;font-weight:normal;color:#333;white-space:pre;transform:scaleY(1.1);transform-origin:0 11.03px;;">4</div>
<div style="position:absolute;left:223px;top:216px;width:32px;height:17px;box-sizing:border-box;border-bottom:1px solid #C8C8C8;background:#FFFFFF"></div>
<div style="position:absolute;top:216.57px;left:-261.50px;width:1000px;text-align:center;line-height:15px;height:15px;font-size:10.2px;font-weight:normal;color:#333;white-space:pre;transform:scaleY(1.1);transform-origin:0 11.03px;;">5</div>
<div style="position:absolute;left:223px;top:233px;width:32px;height:10px;box-sizing:border-box;border-bottom:1px solid #C8C8C8;background:#FFFFFF"></div>
<div style="position:absolute;top:230.07px;left:-261.50px;width:1000px;text-align:center;line-height:15px;height:15px;font-size:10.2px;font-weight:normal;color:#333;white-space:pre;transform:scaleY(1.1);transform-origin:0 11.03px;;">6</div>
<div style="position:absolute;left:223px;top:243px;width:32px;height:13px;box-sizing:border-box;border-bottom:1px solid #C8C8C8;background:#FFFFFF"></div>
<div style="position:absolute;top:241.57px;left:-261.50px;width:1000px;text-align:center;line-height:15px;height:15px;font-size:10.2px;font-weight:normal;color:#333;white-space:pre;transform:scaleY(1.1);transform-origin:0 11.03px;;">7</div>
<div style="position:absolute;left:223px;top:256px;width:32px;height:17px;box-sizing:border-box;border-bottom:1px solid #C8C8C8;background:#FFFFFF"></div>
<div style="position:absolute;top:256.57px;left:-261.50px;width:1000px;text-align:center;line-height:15px;height:15px;font-size:10.2px;font-weight:normal;color:#333;white-space:pre;transform:scaleY(1.1);transform-origin:0 11.03px;;">8</div>
<div style="position:absolute;left:223px;top:273px;width:32px;height:10px;box-sizing:border-box;border-bottom:1px solid #C8C8C8;background:#FFFFFF"></div>
<div style="position:absolute;top:270.07px;left:-261.50px;width:1000px;text-align:center;line-height:15px;height:15px;font-size:10.2px;font-weight:normal;color:#333;white-space:pre;transform:scaleY(1.1);transform-origin:0 11.03px;;">9</div>
<div style="position:absolute;left:223px;top:283px;width:32px;height:13px;box-sizing:border-box;border-bottom:1px solid #C8C8C8;background:#FFFFFF"></div>
<div style="position:absolute;top:281.57px;left:-261.50px;width:1000px;text-align:center;line-height:15px;height:15px;font-size:10.2px;font-weight:normal;color:#333;white-space:pre;transform:scaleY(1.1);transform-origin:0 11.03px;;">10</div>
<div style="position:absolute;left:223px;top:296px;width:32px;height:17px;box-sizing:border-box;border-bottom:1px solid #C8C8C8;background:#FFFFFF"></div>
<div style="position:absolute;top:296.57px;left:-261.50px;width:1000px;text-align:center;line-height:15px;height:15px;font-size:10.2px;font-weight:normal;color:#333;white-space:pre;transform:scaleY(1.1);transform-origin:0 11.03px;;">11</div>
<div style="position:absolute;left:223px;top:313px;width:32px;height:33px;box-sizing:border-box;border-bottom:1px solid #C8C8C8;background:#FFFFFF"></div>
<div style="position:absolute;top:321.57px;left:-261.50px;width:1000px;text-align:center;line-height:15px;height:15px;font-size:10.2px;font-weight:normal;color:#333;white-space:pre;transform:scaleY(1.1);transform-origin:0 11.03px;;">12</div>
<div style="position:absolute;left:223px;top:346px;width:32px;height:13px;box-sizing:border-box;border-bottom:1px solid #C8C8C8;background:#FFFFFF"></div>
<div style="position:absolute;top:344.57px;left:-261.50px;width:1000px;text-align:center;line-height:15px;height:15px;font-size:10.2px;font-weight:normal;color:#333;white-space:pre;transform:scaleY(1.1);transform-origin:0 11.03px;;">13</div>
<div style="position:absolute;left:223px;top:359px;width:32px;height:14px;box-sizing:border-box;border-bottom:1px solid #C8C8C8;background:#EBEBEB"></div>
<div style="position:absolute;top:358.07px;left:-261.50px;width:1000px;text-align:center;line-height:15px;height:15px;font-size:10.2px;font-weight:bold;color:#222;white-space:pre;transform:scaleY(1.1);transform-origin:0 11.03px;;">14</div>
<div style="position:absolute;left:223px;top:373px;width:32px;height:14px;box-sizing:border-box;border-bottom:1px solid #C8C8C8;background:#EBEBEB"></div>
<div style="position:absolute;top:372.07px;left:-261.50px;width:1000px;text-align:center;line-height:15px;height:15px;font-size:10.2px;font-weight:bold;color:#222;white-space:pre;transform:scaleY(1.1);transform-origin:0 11.03px;;">15</div>
<div style="position:absolute;left:223px;top:387px;width:32px;height:13px;box-sizing:border-box;border-bottom:1px solid #C8C8C8;background:#FFFFFF"></div>
<div style="position:absolute;top:385.57px;left:-261.50px;width:1000px;text-align:center;line-height:15px;height:15px;font-size:10.2px;font-weight:normal;color:#333;white-space:pre;transform:scaleY(1.1);transform-origin:0 11.03px;;">16</div>
<div style="position:absolute;left:223px;top:400px;width:32px;height:10px;box-sizing:border-box;border-bottom:1px solid #C8C8C8;background:#FFFFFF"></div>
<div style="position:absolute;top:397.07px;left:-261.50px;width:1000px;text-align:center;line-height:15px;height:15px;font-size:10.2px;font-weight:normal;color:#333;white-space:pre;transform:scaleY(1.1);transform-origin:0 11.03px;;">17</div>
<div style="position:absolute;left:223px;top:410px;width:32px;height:17px;box-sizing:border-box;border-bottom:1px solid #C8C8C8;background:#FFFFFF"></div>
<div style="position:absolute;top:410.57px;left:-261.50px;width:1000px;text-align:center;line-height:15px;height:15px;font-size:10.2px;font-weight:normal;color:#333;white-space:pre;transform:scaleY(1.1);transform-origin:0 11.03px;;">18</div>
<div style="position:absolute;left:223px;top:427px;width:32px;height:13px;box-sizing:border-box;border-bottom:1px solid #C8C8C8;background:#FFFFFF"></div>
<div style="position:absolute;top:425.57px;left:-261.50px;width:1000px;text-align:center;line-height:15px;height:15px;font-size:10.2px;font-weight:normal;color:#333;white-space:pre;transform:scaleY(1.1);transform-origin:0 11.03px;;">19</div>
<div style="position:absolute;left:223px;top:440px;width:32px;height:17px;box-sizing:border-box;border-bottom:1px solid #C8C8C8;background:#FFFFFF"></div>
<div style="position:absolute;top:440.57px;left:-261.50px;width:1000px;text-align:center;line-height:15px;height:15px;font-size:10.2px;font-weight:normal;color:#333;white-space:pre;transform:scaleY(1.1);transform-origin:0 11.03px;;">20</div>
<div style="position:absolute;left:223px;top:457px;width:32px;height:14px;box-sizing:border-box;border-bottom:1px solid #C8C8C8;background:#FFFFFF"></div>
<div style="position:absolute;top:456.07px;left:-261.50px;width:1000px;text-align:center;line-height:15px;height:15px;font-size:10.2px;font-weight:normal;color:#333;white-space:pre;transform:scaleY(1.1);transform-origin:0 11.03px;;">21</div>
<div style="position:absolute;left:223px;top:471px;width:32px;height:9px;box-sizing:border-box;border-bottom:1px solid #C8C8C8;background:#FFFFFF"></div>
<div style="position:absolute;top:467.57px;left:-261.50px;width:1000px;text-align:center;line-height:15px;height:15px;font-size:10.2px;font-weight:normal;color:#333;white-space:pre;transform:scaleY(1.1);transform-origin:0 11.03px;;">22</div>
<div style="position:absolute;left:223px;top:480px;width:32px;height:14px;box-sizing:border-box;border-bottom:1px solid #C8C8C8;background:#FFFFFF"></div>
<div style="position:absolute;top:479.07px;left:-261.50px;width:1000px;text-align:center;line-height:15px;height:15px;font-size:10.2px;font-weight:normal;color:#333;white-space:pre;transform:scaleY(1.1);transform-origin:0 11.03px;;">23</div>
<div style="position:absolute;left:223px;top:494px;width:32px;height:17px;box-sizing:border-box;border-bottom:1px solid #C8C8C8;background:#FFFFFF"></div>
<div style="position:absolute;top:494.57px;left:-261.50px;width:1000px;text-align:center;line-height:15px;height:15px;font-size:10.2px;font-weight:normal;color:#333;white-space:pre;transform:scaleY(1.1);transform-origin:0 11.03px;;">24</div>
<div style="position:absolute;left:223px;top:511px;width:32px;height:13px;box-sizing:border-box;border-bottom:1px solid #C8C8C8;background:#FFFFFF"></div>
<div style="position:absolute;top:509.57px;left:-261.50px;width:1000px;text-align:center;line-height:15px;height:15px;font-size:10.2px;font-weight:normal;color:#333;white-space:pre;transform:scaleY(1.1);transform-origin:0 11.03px;;">25</div>
<div style="position:absolute;left:223px;top:524px;width:32px;height:10px;box-sizing:border-box;border-bottom:1px solid #C8C8C8;background:#FFFFFF"></div>
<div style="position:absolute;top:521.07px;left:-261.50px;width:1000px;text-align:center;line-height:15px;height:15px;font-size:10.2px;font-weight:normal;color:#333;white-space:pre;transform:scaleY(1.1);transform-origin:0 11.03px;;">26</div>
<div style="position:absolute;left:223px;top:534px;width:32px;height:14px;box-sizing:border-box;border-bottom:1px solid #C8C8C8;background:#FFFFFF"></div>
<div style="position:absolute;top:533.07px;left:-261.50px;width:1000px;text-align:center;line-height:15px;height:15px;font-size:10.2px;font-weight:normal;color:#333;white-space:pre;transform:scaleY(1.1);transform-origin:0 11.03px;;">27</div>
<div style="position:absolute;left:223px;top:548px;width:32px;height:16px;box-sizing:border-box;border-bottom:1px solid #C8C8C8;background:#FFFFFF"></div>
<div style="position:absolute;top:548.07px;left:-261.50px;width:1000px;text-align:center;line-height:15px;height:15px;font-size:10.2px;font-weight:normal;color:#333;white-space:pre;transform:scaleY(1.1);transform-origin:0 11.03px;;">28</div>
<div style="position:absolute;left:223px;top:564px;width:32px;height:14px;box-sizing:border-box;border-bottom:1px solid #C8C8C8;background:#FFFFFF"></div>
<div style="position:absolute;top:563.07px;left:-261.50px;width:1000px;text-align:center;line-height:15px;height:15px;font-size:10.2px;font-weight:normal;color:#333;white-space:pre;transform:scaleY(1.1);transform-origin:0 11.03px;;">29</div>
<div style="position:absolute;left:223px;top:578px;width:32px;height:14px;box-sizing:border-box;border-bottom:1px solid #C8C8C8;background:#FFFFFF"></div>
<div style="position:absolute;top:577.07px;left:-261.50px;width:1000px;text-align:center;line-height:15px;height:15px;font-size:10.2px;font-weight:normal;color:#333;white-space:pre;transform:scaleY(1.1);transform-origin:0 11.03px;;">30</div>
<div style="position:absolute;left:223px;top:592px;width:32px;height:13px;box-sizing:border-box;border-bottom:1px solid #C8C8C8;background:#FFFFFF"></div>
<div style="position:absolute;top:590.57px;left:-261.50px;width:1000px;text-align:center;line-height:15px;height:15px;font-size:10.2px;font-weight:normal;color:#333;white-space:pre;transform:scaleY(1.1);transform-origin:0 11.03px;;">31</div>
<div style="position:absolute;left:223px;top:605px;width:32px;height:14px;box-sizing:border-box;border-bottom:1px solid #C8C8C8;background:#FFFFFF"></div>
<div style="position:absolute;top:604.07px;left:-261.50px;width:1000px;text-align:center;line-height:15px;height:15px;font-size:10.2px;font-weight:normal;color:#333;white-space:pre;transform:scaleY(1.1);transform-origin:0 11.03px;;">32</div>
<div style="position:absolute;left:223px;top:619px;width:32px;height:13px;box-sizing:border-box;border-bottom:1px solid #C8C8C8;background:#FFFFFF"></div>
<div style="position:absolute;top:617.57px;left:-261.50px;width:1000px;text-align:center;line-height:15px;height:15px;font-size:10.2px;font-weight:normal;color:#333;white-space:pre;transform:scaleY(1.1);transform-origin:0 11.03px;;">33</div>
<div style="position:absolute;left:223px;top:632px;width:32px;height:14px;box-sizing:border-box;border-bottom:1px solid #C8C8C8;background:#FFFFFF"></div>
<div style="position:absolute;top:631.07px;left:-261.50px;width:1000px;text-align:center;line-height:15px;height:15px;font-size:10.2px;font-weight:normal;color:#333;white-space:pre;transform:scaleY(1.1);transform-origin:0 11.03px;;">34</div>
<div style="position:absolute;left:223px;top:646px;width:32px;height:14px;box-sizing:border-box;border-bottom:1px solid #C8C8C8;background:#FFFFFF"></div>
<div style="position:absolute;top:645.07px;left:-261.50px;width:1000px;text-align:center;line-height:15px;height:15px;font-size:10.2px;font-weight:normal;color:#333;white-space:pre;transform:scaleY(1.1);transform-origin:0 11.03px;;">35</div>
<div style="position:absolute;left:223px;top:660px;width:32px;height:13px;box-sizing:border-box;border-bottom:1px solid #C8C8C8;background:#FFFFFF"></div>
<div style="position:absolute;top:658.57px;left:-261.50px;width:1000px;text-align:center;line-height:15px;height:15px;font-size:10.2px;font-weight:normal;color:#333;white-space:pre;transform:scaleY(1.1);transform-origin:0 11.03px;;">36</div>
<div style="position:absolute;left:223px;top:673px;width:32px;height:14px;box-sizing:border-box;border-bottom:1px solid #C8C8C8;background:#FFFFFF"></div>
<div style="position:absolute;top:672.07px;left:-261.50px;width:1000px;text-align:center;line-height:15px;height:15px;font-size:10.2px;font-weight:normal;color:#333;white-space:pre;transform:scaleY(1.1);transform-origin:0 11.03px;;">37</div>
<div style="position:absolute;left:223px;top:687px;width:32px;height:13px;box-sizing:border-box;border-bottom:1px solid #C8C8C8;background:#FFFFFF"></div>
<div style="position:absolute;top:685.57px;left:-261.50px;width:1000px;text-align:center;line-height:15px;height:15px;font-size:10.2px;font-weight:normal;color:#333;white-space:pre;transform:scaleY(1.1);transform-origin:0 11.03px;;">38</div>
<div style="position:absolute;left:223px;top:700px;width:32px;height:14px;box-sizing:border-box;border-bottom:1px solid #C8C8C8;background:#FFFFFF"></div>
<div style="position:absolute;top:699.07px;left:-261.50px;width:1000px;text-align:center;line-height:15px;height:15px;font-size:10.2px;font-weight:normal;color:#333;white-space:pre;transform:scaleY(1.1);transform-origin:0 11.03px;;">39</div>
<div style="position:absolute;left:223px;top:714px;width:32px;height:14px;box-sizing:border-box;border-bottom:1px solid #C8C8C8;background:#FFFFFF"></div>
<div style="position:absolute;top:713.07px;left:-261.50px;width:1000px;text-align:center;line-height:15px;height:15px;font-size:10.2px;font-weight:normal;color:#333;white-space:pre;transform:scaleY(1.1);transform-origin:0 11.03px;;">40</div>
<div style="position:absolute;left:223px;top:728px;width:32px;height:14px;box-sizing:border-box;border-bottom:1px solid #C8C8C8;background:#FFFFFF"></div>
<div style="position:absolute;top:727.07px;left:-261.50px;width:1000px;text-align:center;line-height:15px;height:15px;font-size:10.2px;font-weight:normal;color:#333;white-space:pre;transform:scaleY(1.1);transform-origin:0 11.03px;;">41</div>
<div style="position:absolute;left:222px;top:160px;width:34px;height:1px;background:#FF4A4A"></div>
<div style="position:absolute;left:222px;top:215px;width:34px;height:1px;background:#FF4A4A"></div>
<div style="position:absolute;left:222px;top:242px;width:34px;height:1px;background:#FF4A4A"></div>
<div style="position:absolute;left:222px;top:255px;width:34px;height:1px;background:#FF4A4A"></div>
<div style="position:absolute;left:222px;top:282px;width:34px;height:1px;background:#FF4A4A"></div>
<div style="position:absolute;left:222px;top:295px;width:34px;height:1px;background:#FF4A4A"></div>
<div style="position:absolute;left:222px;top:345px;width:34px;height:1px;background:#FF4A4A"></div>
<div style="position:absolute;left:222px;top:358px;width:34px;height:1px;background:#FF4A4A"></div>
<div style="position:absolute;left:222px;top:386px;width:34px;height:1px;background:#FF4A4A"></div>
<div style="position:absolute;left:222px;top:399px;width:34px;height:1px;background:#FF4A4A"></div>
<div style="position:absolute;left:222px;top:426px;width:34px;height:1px;background:#FF4A4A"></div>
<div style="position:absolute;left:222px;top:439px;width:34px;height:1px;background:#FF4A4A"></div>
<div style="position:absolute;left:222px;top:456px;width:34px;height:1px;background:#FF4A4A"></div>
<div style="position:absolute;left:222px;top:470px;width:34px;height:1px;background:#FF4A4A"></div>
<div style="position:absolute;left:222px;top:510px;width:34px;height:1px;background:#FF4A4A"></div>
<div style="position:absolute;left:222px;top:523px;width:34px;height:1px;background:#FF4A4A"></div>
<div style="position:absolute;left:222px;top:563px;width:34px;height:1px;background:#FF4A4A"></div>
</div>
<div style="position:absolute;left:222px;top:133px;width:34px;height:14px;box-sizing:border-box;border:1px solid #C6C6C6;border-right:none;background:linear-gradient(#FFFFFF,#F4F4F4)"></div>
<div style="position:absolute;left:158px;top:146px;width:98px;height:1px;background:#BDBDBD"></div>
<div style="position:absolute;left:255px;top:97px;width:1px;height:620px;background:#A8A8A8"></div>
<div style="position:absolute;left:161px;top:160px;width:61px;height:56px;box-sizing:border-box;border:1px solid #C8C8C8;border-right:none;border-bottom:1px solid #B8B8B8;background:#fff"></div>
<div style="position:absolute;left:163px;top:160.27px;width:59px;height:15px;overflow:hidden"><div style="position:absolute;top:0;left:0.80px;line-height:15px;height:15px;font-size:10.2px;font-weight:normal;color:#3A3A3A;white-space:pre;transform:scaleY(1.1);transform-origin:0 11.03px;;">Заголовок</div></div>
<div style="position:absolute;left:161px;top:215px;width:61px;height:28px;box-sizing:border-box;border:1px solid #C8C8C8;border-right:none;border-bottom:1px solid #B8B8B8;background:#fff"></div>
<div style="position:absolute;left:163px;top:215.27px;width:59px;height:15px;overflow:hidden"><div style="position:absolute;top:0;left:0.80px;line-height:15px;height:15px;font-size:10.2px;font-weight:normal;color:#3A3A3A;white-space:pre;transform:scaleY(1.1);transform-origin:0 11.03px;;">Поставщик</div></div>
<div style="position:absolute;left:161px;top:255px;width:61px;height:28px;box-sizing:border-box;border:1px solid #C8C8C8;border-right:none;border-bottom:1px solid #B8B8B8;background:#fff"></div>
<div style="position:absolute;left:163px;top:255.27px;width:59px;height:15px;overflow:hidden"><div style="position:absolute;top:0;left:0.80px;line-height:15px;height:15px;font-size:10.2px;font-weight:normal;color:#3A3A3A;white-space:pre;transform:scaleY(1.1);transform-origin:0 11.03px;;">Покупатель</div></div>
<div style="position:absolute;left:161px;top:295px;width:61px;height:51px;box-sizing:border-box;border:1px solid #C8C8C8;border-right:none;border-bottom:1px solid #B8B8B8;background:#fff"></div>
<div style="position:absolute;left:163px;top:295.27px;width:59px;height:15px;overflow:hidden"><div style="position:absolute;top:0;left:0.80px;line-height:15px;height:15px;font-size:10.2px;font-weight:normal;color:#3A3A3A;white-space:pre;transform:scaleY(1.1);transform-origin:0 11.03px;;">ШапкаТаблицы</div></div>
<div style="position:absolute;left:161px;top:358px;width:61px;height:29px;box-sizing:border-box;border:1px solid #C8C8C8;border-right:none;border-bottom:1px solid #B8B8B8;background:#fff"></div>
<div style="position:absolute;left:163px;top:358.27px;width:59px;height:15px;overflow:hidden"><div style="position:absolute;top:0;left:0.80px;line-height:15px;height:15px;font-size:10.2px;font-weight:normal;color:#3A3A3A;white-space:pre;transform:scaleY(1.1);transform-origin:0 11.03px;;">Строка</div></div>
<div style="position:absolute;left:161px;top:399px;width:61px;height:28px;box-sizing:border-box;border:1px solid #C8C8C8;border-right:none;border-bottom:1px solid #B8B8B8;background:#fff"></div>
<div style="position:absolute;left:163px;top:399.27px;width:59px;height:15px;overflow:hidden"><div style="position:absolute;top:0;left:0.80px;line-height:15px;height:15px;font-size:10.2px;font-weight:normal;color:#3A3A3A;white-space:pre;transform:scaleY(1.1);transform-origin:0 11.03px;;">Итого</div></div>
<div style="position:absolute;left:161px;top:439px;width:61px;height:18px;box-sizing:border-box;border:1px solid #C8C8C8;border-right:none;border-bottom:1px solid #B8B8B8;background:#fff"></div>
<div style="position:absolute;left:163px;top:439.27px;width:59px;height:15px;overflow:hidden"><div style="position:absolute;top:0;left:0.80px;line-height:15px;height:15px;font-size:10.2px;font-weight:normal;color:#3A3A3A;white-space:pre;transform:scaleY(1.1);transform-origin:0 11.03px;;">ИтогоНДС</div></div>
<div style="position:absolute;left:161px;top:470px;width:61px;height:41px;box-sizing:border-box;border:1px solid #C8C8C8;border-right:none;border-bottom:1px solid #B8B8B8;background:#fff"></div>
<div style="position:absolute;left:163px;top:470.27px;width:59px;height:15px;overflow:hidden"><div style="position:absolute;top:0;left:0.80px;line-height:15px;height:15px;font-size:10.2px;font-weight:normal;color:#3A3A3A;white-space:pre;transform:scaleY(1.1);transform-origin:0 11.03px;;">СуммаПрописью</div></div>
<div style="position:absolute;left:161px;top:523px;width:61px;height:41px;box-sizing:border-box;border:1px solid #C8C8C8;border-right:none;border-bottom:1px solid #B8B8B8;background:#fff"></div>
<div style="position:absolute;left:163px;top:523.27px;width:59px;height:15px;overflow:hidden"><div style="position:absolute;top:0;left:0.80px;line-height:15px;height:15px;font-size:10.2px;font-weight:normal;color:#3A3A3A;white-space:pre;transform:scaleY(1.1);transform-origin:0 11.03px;;">Подписи</div></div>
<svg style="position:absolute;left:999px;top:104px" width="7" height="5" viewBox="0 0 7 5"><path d="M0.5 4.5L3.5 0.5L6.5 4.5z" fill="#C8C8C8"/></svg>
<div style="position:absolute;left:999px;top:116px;width:6px;height:582px;border-radius:3px;background:#9B9B9B"></div>
<svg style="position:absolute;left:999px;top:706px" width="7" height="5" viewBox="0 0 7 5"><path d="M0.5 0.5L3.5 4.5L6.5 0.5z" fill="#555"/></svg>
<svg style="position:absolute;left:164px;top:719px" width="5" height="7" viewBox="0 0 5 7"><path d="M4.5 0.5L0.5 3.5L4.5 6.5z" fill="#C8C8C8"/></svg>
<div style="position:absolute;left:177px;top:720px;width:801px;height:6px;border-radius:3px;background:#DCDCDC"></div>
<div style="position:absolute;left:177px;top:720px;width:646px;height:6px;border-radius:3px;background:#9B9B9B"></div>
<svg style="position:absolute;left:985px;top:719px" width="5" height="7" viewBox="0 0 5 7"><path d="M0.5 0.5L4.5 3.5L0.5 6.5z" fill="#444"/></svg>
</body></html>
